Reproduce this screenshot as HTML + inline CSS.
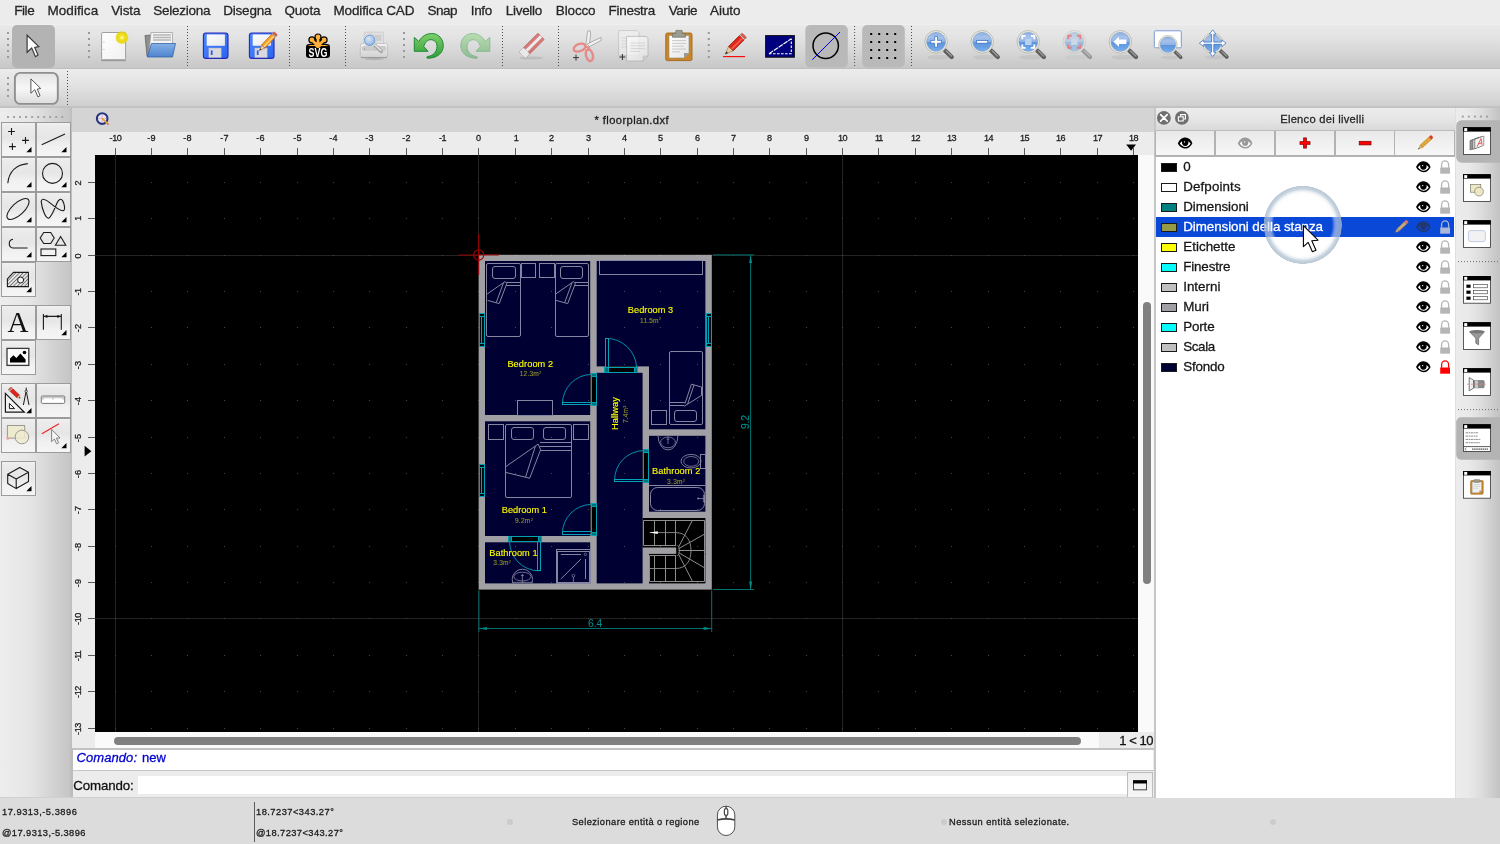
<!DOCTYPE html><html><head><meta charset="utf-8"><title>QCAD</title>
<style>html,body{margin:0;padding:0;}
body{width:1500px;height:844px;overflow:hidden;position:relative;background:#ececec;font-family:"Liberation Sans",sans-serif;}
.t{position:absolute;white-space:nowrap;line-height:1;font-family:"Liberation Sans",sans-serif;}
.a{position:absolute;}
svg{position:absolute;overflow:visible;}
#root{position:absolute;left:0;top:0;width:1500px;height:844px;overflow:hidden;will-change:transform;background:#ececec;}
.hv{-webkit-text-stroke:0.28px currentColor;}
.hv2{-webkit-text-stroke:0.12px currentColor;}
</style></head><body><div id="root">
<!-- base -->
<div class="a" style="left:0;top:0;width:1500px;height:24px;background:#ececec"></div>
<div class="a" style="left:0;top:24px;width:1500px;height:44px;background:linear-gradient(#f4f4f4 0,#e9e9e9 2.5%,#e3e3e3 30%,#d7d7d7 62%,#c7c7c7 100%)"></div>
<div class="a" style="left:0;top:68px;width:1500px;height:1px;background:#c0c0c0"></div>
<div class="a" style="left:0;top:69px;width:1500px;height:38px;background:linear-gradient(#ececec,#e4e4e4 35%,#d9d9d9 70%,#cecece)"></div>
<div class="a" style="left:0;top:106px;width:1500px;height:2px;background:#c2c2c2"></div>
<div class="a" style="left:0;top:108px;width:72px;height:689px;background:linear-gradient(90deg,#ededed,#e6e6e6 40%,#c6c6c6 96%,#bdbdbd)"></div>
<div class="a" style="left:72px;top:108px;width:1082px;height:24px;background:#d4d4d4"></div>
<div class="a" style="left:72px;top:132px;width:1082px;height:617px;background:#ececec"></div>
<div class="a" style="left:1138px;top:155px;width:16px;height:594px;background:#fafafa"></div>
<div class="a" style="left:95px;top:732px;width:1043px;height:17px;background:#fafafa"></div>
<div class="a" style="left:95px;top:155px;width:1043px;height:577px;background:#000"></div>
<div class="a" style="left:0;top:797px;width:1500px;height:47px;background:#dcdcdc"></div>
<!-- menu -->
<div class="t hv" style="left:14.25px;top:3.67px;font-size:13.5px;letter-spacing:-0.438px;color:#262626;">File</div>
<div class="t hv" style="left:47.50px;top:3.67px;font-size:13.5px;letter-spacing:0.060px;color:#262626;">Modifica</div>
<div class="t hv" style="left:111.25px;top:3.67px;font-size:13.5px;letter-spacing:-0.154px;color:#262626;">Vista</div>
<div class="t hv" style="left:153.25px;top:3.67px;font-size:13.5px;letter-spacing:-0.255px;color:#262626;">Seleziona</div>
<div class="t hv" style="left:223.25px;top:3.67px;font-size:13.5px;letter-spacing:-0.218px;color:#262626;">Disegna</div>
<div class="t hv" style="left:284.50px;top:3.67px;font-size:13.5px;letter-spacing:-0.205px;color:#262626;">Quota</div>
<div class="t hv" style="left:333.50px;top:3.67px;font-size:13.5px;letter-spacing:-0.148px;color:#262626;">Modifica CAD</div>
<div class="t hv" style="left:427.50px;top:3.67px;font-size:13.5px;letter-spacing:-0.507px;color:#262626;">Snap</div>
<div class="t hv" style="left:470.75px;top:3.67px;font-size:13.5px;letter-spacing:-0.317px;color:#262626;">Info</div>
<div class="t hv" style="left:505.75px;top:3.67px;font-size:13.5px;letter-spacing:-0.289px;color:#262626;">Livello</div>
<div class="t hv" style="left:555.75px;top:3.67px;font-size:13.5px;letter-spacing:-0.128px;color:#262626;">Blocco</div>
<div class="t hv" style="left:608.50px;top:3.67px;font-size:13.5px;letter-spacing:-0.283px;color:#262626;">Finestra</div>
<div class="t hv" style="left:668.75px;top:3.67px;font-size:13.5px;letter-spacing:-0.453px;color:#262626;">Varie</div>
<div class="t hv" style="left:710.00px;top:3.67px;font-size:13.5px;letter-spacing:-0.054px;color:#262626;">Aiuto</div>
<!-- toolbar -->
<svg width="1500" height="110" viewBox="0 0 1500 110" style="left:0;top:0">
<defs>
<radialGradient id="lens" cx="0.5" cy="0.35" r="0.7"><stop offset="0" stop-color="#a9c8ee"/><stop offset="0.6" stop-color="#5f97dc"/><stop offset="1" stop-color="#3f7ac8"/></radialGradient>
<linearGradient id="lensf" x1="0" y1="0" x2="0" y2="1"><stop offset="0" stop-color="#8eaee0"/><stop offset="0.25" stop-color="#a5c2ea"/><stop offset="0.49" stop-color="#8db3e6"/><stop offset="0.51" stop-color="#5d93da"/><stop offset="0.8" stop-color="#6aa2e6"/><stop offset="1" stop-color="#7ab4f2"/></linearGradient>
<linearGradient id="flop" x1="0" y1="0" x2="1" y2="1"><stop offset="0" stop-color="#4f86ff"/><stop offset="1" stop-color="#2a66f0"/></linearGradient>
<linearGradient id="paper" x1="0" y1="0" x2="1" y2="1"><stop offset="0" stop-color="#ffffff"/><stop offset="1" stop-color="#e4e4e4"/></linearGradient>
<linearGradient id="gr1" x1="0" y1="0" x2="0" y2="1"><stop offset="0" stop-color="#7fd06a"/><stop offset="1" stop-color="#2f9e3a"/></linearGradient>
<linearGradient id="fold" x1="0" y1="0" x2="0" y2="1"><stop offset="0" stop-color="#86b0e6"/><stop offset="1" stop-color="#4c84cf"/></linearGradient><linearGradient id="paper2" x1="0" y1="0" x2="1" y2="1"><stop offset="0" stop-color="#ffffff"/><stop offset="1" stop-color="#f0f0f0"/></linearGradient>
<radialGradient id="glow" cx="0.5" cy="0.5" r="0.5"><stop offset="0" stop-color="#fffbd0"/><stop offset="0.35" stop-color="#f2e21a"/><stop offset="0.75" stop-color="#e6d400" stop-opacity="0.9"/><stop offset="1" stop-color="#e6d400" stop-opacity="0"/></radialGradient>
<g id="mag"><ellipse cx="3" cy="15.4" rx="12" ry="2.4" fill="#000" opacity="0.055"/><line x1="9" y1="8.8" x2="15.6" y2="15.2" stroke="#5e5e5e" stroke-width="4.3" stroke-linecap="round"/><line x1="10" y1="9" x2="15.4" y2="14.2" stroke="#9a9a9a" stroke-width="1.3" stroke-linecap="round"/><circle cx="0" cy="0" r="11.3" fill="#e9e9e3" stroke="#b9b9ab" stroke-width="0.9"/><circle cx="0" cy="0" r="9.4" fill="url(#lensf)" stroke="#7f9cc8" stroke-width="0.7"/></g>
</defs>
<rect x="7" y="32" width="2" height="2" fill="#9a9a9a"/><rect x="7" y="38" width="2" height="2" fill="#9a9a9a"/><rect x="7" y="44" width="2" height="2" fill="#9a9a9a"/><rect x="7" y="50" width="2" height="2" fill="#9a9a9a"/><rect x="7" y="56" width="2" height="2" fill="#9a9a9a"/>
<rect x="12" y="25" width="43" height="43" rx="5" fill="#b3b3b3"/>
<path d="M27.10,35.20 L27.10,52.30 L31.70,48.00 L35.50,56.70 L38.00,55.10 L34.70,47.40 L38.80,46.60Z" fill="#fff" stroke="#3a3a3a" stroke-width="1.2" stroke-linejoin="miter"/>
<rect x="88" y="32" width="2" height="2" fill="#9a9a9a"/><rect x="88" y="38" width="2" height="2" fill="#9a9a9a"/><rect x="88" y="44" width="2" height="2" fill="#9a9a9a"/><rect x="88" y="50" width="2" height="2" fill="#9a9a9a"/><rect x="88" y="56" width="2" height="2" fill="#9a9a9a"/>
<g><rect x="101.6" y="32.5" width="24" height="27.2" rx="1" fill="url(#paper2)" stroke="#969696" stroke-width="0.9"/><line x1="101" y1="60.6" x2="126" y2="60.6" stroke="#9a9a9a" stroke-width="1.2"/><rect x="103.3" y="41.5" width="1.2" height="1" fill="#bbb"/><rect x="103.3" y="49" width="1.2" height="1" fill="#bbb"/><circle cx="121.9" cy="37.6" r="7" fill="url(#glow)"/></g>
<g><path d="M145,35.5 L152,35 L153,37 L170,37 L170,56 L147,56 Z" fill="#8e8e8e" stroke="#666" stroke-width="0.8"/>
<path d="M151,32.5 L172.5,32.5 L172.5,50 L149,52 Z" fill="#f4f4f4" stroke="#9a9a9a" stroke-width="0.7"/>
<path d="M153,35 L171,35 M153,37.5 L171,37.5 M153,40 L171,40" stroke="#b5b5b5" stroke-width="1.4"/>
<path d="M151.5,43.5 L175.5,43.5 L172.5,57 L147.2,57 Z" fill="url(#fold)" stroke="#3465a4" stroke-width="0.8"/></g>
<line x1="187.5" y1="26" x2="187.5" y2="66" stroke="#4d4d4d" stroke-width="1" stroke-dasharray="1 2"/>
<g><rect x="203.4" y="33" width="24.6" height="25.4" rx="2.5" fill="url(#flop)" stroke="#2727b8" stroke-width="1.1"/>
<rect x="206.8" y="34.6" width="18" height="11" fill="#f3f5fb"/><rect x="206.8" y="34.6" width="18" height="11" fill="url(#paper)" opacity="0.7"/>
<rect x="208.8" y="48" width="12.4" height="9.6" fill="#d9d9de" stroke="#9fa4c8" stroke-width="0.5"/><rect x="210.8" y="50.4" width="1.8" height="4.6" fill="#2a5fe8"/></g>
<g><rect x="249.4" y="33" width="24.6" height="25.4" rx="2.5" fill="url(#flop)" stroke="#2727b8" stroke-width="1.1"/>
<rect x="252.8" y="34.6" width="18" height="11" fill="#f3f5fb"/><rect x="252.8" y="34.6" width="18" height="11" fill="url(#paper)" opacity="0.7"/>
<rect x="254.8" y="48" width="12.4" height="9.6" fill="#d9d9de" stroke="#9fa4c8" stroke-width="0.5"/><rect x="256.8" y="50.4" width="1.8" height="4.6" fill="#2a5fe8"/></g>
<g><path d="M259.40,50.60 L265.02,47.99 L261.67,44.84Z" fill="#e9c9a0" stroke="#8a5a2b" stroke-width="0.5"/><path d="M259.40,50.60 L261.37,49.69 L260.19,48.58Z" fill="#222"/><path d="M265.02,47.99 L275.14,37.25 L271.79,34.10 L261.67,44.84Z" fill="#f5a21b" stroke="#c4610f" stroke-width="0.7"/><path d="M263.76,46.81 L273.89,36.07" stroke="#ffd98a" stroke-width="1.29"/><path d="M275.14,37.25 L275.96,36.38 L272.62,33.22 L271.79,34.10Z" fill="#d8d8d8" stroke="#999" stroke-width="0.4"/><path d="M275.96,36.38 L277.20,35.07 Q276.21,32.76 273.85,31.91 L272.62,33.22Z" fill="#e35b4c" stroke="#a8362b" stroke-width="0.5"/></g>
<line x1="289.5" y1="26" x2="289.5" y2="66" stroke="#4d4d4d" stroke-width="1" stroke-dasharray="1 2"/>
<g><line x1="318.00" y1="45.00" x2="318.00" y2="37.00" stroke="#000" stroke-width="5.2" stroke-linecap="round"/><circle cx="318.00" cy="37.00" r="3.6" fill="#000"/><line x1="318.71" y1="45.29" x2="324.08" y2="39.92" stroke="#000" stroke-width="5.2" stroke-linecap="round"/><circle cx="324.08" cy="39.92" r="3.6" fill="#000"/><line x1="317.29" y1="45.29" x2="311.92" y2="39.92" stroke="#000" stroke-width="5.2" stroke-linecap="round"/><circle cx="311.92" cy="39.92" r="3.6" fill="#000"/><rect x="306" y="44" width="24" height="14" rx="3.2" fill="#000"/><line x1="318.00" y1="46.00" x2="318.00" y2="37.00" stroke="#ffb13b" stroke-width="2.8" stroke-linecap="round"/><circle cx="318.00" cy="37.00" r="2.4" fill="#ffb13b"/><line x1="318.00" y1="46.00" x2="324.08" y2="39.92" stroke="#ffb13b" stroke-width="2.8" stroke-linecap="round"/><circle cx="324.08" cy="39.92" r="2.4" fill="#ffb13b"/><line x1="318.00" y1="46.00" x2="311.92" y2="39.92" stroke="#ffb13b" stroke-width="2.8" stroke-linecap="round"/><circle cx="311.92" cy="39.92" r="2.4" fill="#ffb13b"/><path d="M308,46 Q309,44.9 311,44.9 L325,44.9 Q327,44.9 328.3,46Z" fill="#ffb13b"/><circle cx="318" cy="45" r="3" fill="#ffb13b"/><text x="318" y="56.8" font-family="Liberation Sans" font-weight="bold" font-size="13" fill="#fff" text-anchor="middle" textLength="18.8" lengthAdjust="spacingAndGlyphs">SVG</text></g>
<line x1="345.5" y1="26" x2="345.5" y2="66" stroke="#4d4d4d" stroke-width="1" stroke-dasharray="1 2"/>
<defs><linearGradient id="prb" x1="0" y1="0" x2="0" y2="1"><stop offset="0" stop-color="#f4f4f4"/><stop offset="0.45" stop-color="#e2e2e2"/><stop offset="1" stop-color="#d2d2d2"/></linearGradient>
<radialGradient id="lens2" cx="0.4" cy="0.35" r="0.75"><stop offset="0" stop-color="#dbe6f4"/><stop offset="0.6" stop-color="#a9c4e6"/><stop offset="1" stop-color="#7fa8dc"/></radialGradient></defs>
<g><rect x="364.4" y="32.2" width="19" height="13" rx="1" fill="#e3e3e3" stroke="#c4c4c4" stroke-width="0.7"/><rect x="373" y="34.6" width="8.6" height="6.6" fill="#cfcfcf"/>
<path d="M362.6,43.4 L385.6,43.4 Q387.7,43.6 387.7,46 L387.7,55.6 Q387.7,57.4 385.6,57.4 L362.4,57.4 Q360.3,57.4 360.3,55.6 L360.3,46 Q360.3,43.6 362.6,43.4Z" fill="url(#prb)" stroke="#b4b4b4" stroke-width="0.7"/>
<rect x="362.4" y="46.6" width="23.2" height="3.6" rx="1" fill="#cdcdcd" stroke="#b2b2b2" stroke-width="0.5"/><circle cx="364.6" cy="49" r="0.6" fill="#777"/>
<path d="M361,57.6 L387,57.6" stroke="#9c9c9c" stroke-width="1.2"/><ellipse cx="374" cy="59" rx="10" ry="1.2" fill="#000" opacity="0.12"/>
<line x1="374.2" y1="44.8" x2="381.2" y2="51.4" stroke="#a8a8a8" stroke-width="3.6" stroke-linecap="round"/><line x1="375" y1="45" x2="381" y2="50.6" stroke="#e8e8e8" stroke-width="1.3" stroke-linecap="round"/>
<circle cx="369.7" cy="40.3" r="6.5" fill="#eeeeea" stroke="#c9c9c2" stroke-width="0.7"/><circle cx="369.7" cy="40.3" r="5.2" fill="url(#lens2)" stroke="#5f8fd2" stroke-width="0.9"/></g>
<rect x="403" y="32" width="2" height="2" fill="#9a9a9a"/><rect x="403" y="38" width="2" height="2" fill="#9a9a9a"/><rect x="403" y="44" width="2" height="2" fill="#9a9a9a"/><rect x="403" y="50" width="2" height="2" fill="#9a9a9a"/><rect x="403" y="56" width="2" height="2" fill="#9a9a9a"/>
<path d="M0,37.3 L4.5,41.5 C7.2,36.5 12.2,33.5 17.4,33.5 C24.2,33.5 29,39 29,45.7 C29,53 22.7,58.4 13.2,58.2 C12.2,58.2 12.2,56.6 13.3,56.5 C18.7,56 22.7,52 22.7,46.4 C22.7,42.5 20.2,39.7 16.4,39.7 C13.2,39.7 10.7,42.5 9.4,46.4 L13.7,51.3 L0,51.3 Z" transform="translate(414.3,0)" fill="url(#gr1)" stroke="#1f8a35" stroke-width="1" stroke-linejoin="round" opacity="1.0"/>
<path d="M0,37.3 L4.5,41.5 C7.2,36.5 12.2,33.5 17.4,33.5 C24.2,33.5 29,39 29,45.7 C29,53 22.7,58.4 13.2,58.2 C12.2,58.2 12.2,56.6 13.3,56.5 C18.7,56 22.7,52 22.7,46.4 C22.7,42.5 20.2,39.7 16.4,39.7 C13.2,39.7 10.7,42.5 9.4,46.4 L13.7,51.3 L0,51.3 Z" transform="translate(489.8,0) scale(-1,1)" fill="url(#gr1)" stroke="#1f8a35" stroke-width="1" stroke-linejoin="round" opacity="0.42"/>
<line x1="502.5" y1="26" x2="502.5" y2="66" stroke="#4d4d4d" stroke-width="1" stroke-dasharray="1 2"/>
<g opacity="0.62"><ellipse cx="531" cy="58" rx="12" ry="1.6" fill="#000" opacity="0.15"/>
<g transform="translate(519,52) rotate(-45)"><rect x="0" y="0" width="26.8" height="9" rx="1" fill="#d23c3c" stroke="#a62a2a" stroke-width="0.7"/><rect x="0" y="3" width="26.8" height="3" fill="#f4f4f4"/><rect x="0" y="0" width="6.2" height="9" rx="0.8" fill="#f6f6f6" stroke="#b8b8b8" stroke-width="0.6"/></g></g>
<line x1="558.5" y1="26" x2="558.5" y2="66" stroke="#4d4d4d" stroke-width="1" stroke-dasharray="1 2"/>
<g><path d="M587.6,31.2 L590.2,30.6 L590.6,34 L588.6,50.6 L585.4,49 Z" fill="#f2f2f2" stroke="#9c9c9c" stroke-width="0.8"/>
<path d="M601,37.4 L601.2,40.4 L589.6,46.6 L587.2,44 Z" fill="#f2f2f2" stroke="#9c9c9c" stroke-width="0.8"/>
<ellipse cx="579.6" cy="47.6" rx="6.2" ry="3.6" transform="rotate(-20 579.6 47.6)" fill="none" stroke="#e68a8a" stroke-width="2.4"/>
<ellipse cx="589.4" cy="55.2" rx="3.4" ry="6" transform="rotate(-14 589.4 55.2)" fill="none" stroke="#e68a8a" stroke-width="2.4"/>
<path d="M584.6,46.4 L588.4,47.6 L588.8,50" stroke="#e68a8a" stroke-width="2.4" fill="none"/>
<path d="M573,57.6 L579,57.6 M576,54.6 L576,60.6" stroke="#333" stroke-width="1"/></g>
<g opacity="0.55"><path d="M618.6,30.6 L637,30.6 L639,32.6 L639,55.4 L618.6,55.4 Z" fill="#f4f4f4" stroke="#a9a9a9" stroke-width="0.8"/><path d="M621.6,38 L634,38 M621.6,41 L634,41 M621.6,44 L634,44 M621.6,47 L634,47" stroke="#c9c9c9" stroke-width="0.9"/></g>
<g opacity="0.78"><path d="M626.6,36.4 L646.4,36.4 L648,38 L648,56 L643,61 L626.6,61 Z" fill="url(#paper)" stroke="#a9a9a9" stroke-width="0.8"/><path d="M648,56 L643,56 L643,61Z" fill="#cfcfcf" stroke="#a9a9a9" stroke-width="0.5"/>
<path d="M630.4,43 L645,43 M630.4,45.8 L645,45.8 M630.4,48.6 L645,48.6 M630.4,51.4 L640,51.4" stroke="#cdcdcd" stroke-width="0.9"/></g>
<path d="M619.4,57 L625.4,57 M622.4,54 L622.4,60" stroke="#333" stroke-width="1"/>
<g><rect x="665.8" y="33" width="26.2" height="27.6" rx="1.6" fill="#c9872a" stroke="#a2661a" stroke-width="0.9"/>
<path d="M669,35.4 L689,35.4 L689,53 L684,58 L669,58 Z" fill="url(#paper)" stroke="#8b8b80" stroke-width="0.6"/><path d="M689,53 L684,53 L684,58Z" fill="#9a9a9a"/>
<path d="M672,40.6 L686,40.6 M672,43.4 L686,43.4 M672,46.2 L684,46.2 M672,49 L686,49 M672,51.8 L680,51.8" stroke="#c4c4c4" stroke-width="0.9"/>
<path d="M672.4,33.4 L675.4,33.4 L676,30.4 L682,30.4 L682.6,33.4 L685.4,33.4 L685.4,37.2 L672.4,37.2 Z" fill="#9b9b8f" stroke="#6e6e64" stroke-width="0.7"/></g>
<rect x="707.8" y="32" width="2" height="2" fill="#9a9a9a"/><rect x="707.8" y="38" width="2" height="2" fill="#9a9a9a"/><rect x="707.8" y="44" width="2" height="2" fill="#9a9a9a"/><rect x="707.8" y="50" width="2" height="2" fill="#9a9a9a"/><rect x="707.8" y="56" width="2" height="2" fill="#9a9a9a"/>
<g><path d="M725.20,54.20 L733.14,50.85 L728.64,46.30Z" fill="#e8c9a0" stroke="#8a5a2b" stroke-width="0.5"/><path d="M725.20,54.20 L727.98,53.03 L726.40,51.43Z" fill="#222"/><path d="M733.14,50.85 L744.23,39.87 L739.73,35.32 L728.64,46.30Z" fill="#e3261a" stroke="#7c170e" stroke-width="0.7"/><path d="M731.45,49.14 L742.55,38.16" stroke="#f4574a" stroke-width="1.79"/><path d="M744.23,39.87 L745.09,39.02 L740.59,34.47 L739.73,35.32Z" fill="#d8d8d8" stroke="#999" stroke-width="0.4"/><path d="M745.09,39.02 L746.37,37.76 Q744.83,34.78 741.86,33.21 L740.59,34.47Z" fill="#e35b4c" stroke="#a8362b" stroke-width="0.5"/></g>
<line x1="723" y1="56.6" x2="745" y2="56.6" stroke="#f00" stroke-width="1.1"/>
<g><rect x="765.6" y="35.6" width="28.8" height="21.6" fill="#00007f" stroke="#111" stroke-width="1"/><path d="M769,53.7 L791.3,53.7 L791.3,38.7" stroke="#fff" stroke-width="1.1" fill="none" stroke-dasharray="2.6 1.4"/><path d="M769,53.7 L791.3,38.7" stroke="#fff" stroke-width="1.1" fill="none" stroke-dasharray="5 0.8"/></g>
<rect x="805.3" y="25" width="42.5" height="42.5" rx="5" fill="#b9b9b9"/>
<circle cx="825.7" cy="45.7" r="12.7" fill="none" stroke="#000" stroke-width="1.5"/>
<line x1="812.3" y1="59.7" x2="840" y2="32" stroke="#0000ff" stroke-width="1"/>
<line x1="854.6" y1="26" x2="854.6" y2="66" stroke="#4d4d4d" stroke-width="1" stroke-dasharray="1 2"/>
<rect x="862.2" y="25" width="42.6" height="42.5" rx="5" fill="#b9b9b9"/>
<rect x="870.2" y="33.0" width="2" height="2" fill="#000"/>
<rect x="870.2" y="41.0" width="2" height="2" fill="#000"/>
<rect x="870.2" y="49.0" width="2" height="2" fill="#000"/>
<rect x="870.2" y="57.0" width="2" height="2" fill="#000"/>
<rect x="878.2" y="33.0" width="2" height="2" fill="#000"/>
<rect x="878.2" y="41.0" width="2" height="2" fill="#000"/>
<rect x="878.2" y="49.0" width="2" height="2" fill="#000"/>
<rect x="878.2" y="57.0" width="2" height="2" fill="#000"/>
<rect x="886.2" y="33.0" width="2" height="2" fill="#000"/>
<rect x="886.2" y="41.0" width="2" height="2" fill="#000"/>
<rect x="886.2" y="49.0" width="2" height="2" fill="#000"/>
<rect x="886.2" y="57.0" width="2" height="2" fill="#000"/>
<rect x="894.2" y="33.0" width="2" height="2" fill="#000"/>
<rect x="894.2" y="41.0" width="2" height="2" fill="#000"/>
<rect x="894.2" y="49.0" width="2" height="2" fill="#000"/>
<rect x="894.2" y="57.0" width="2" height="2" fill="#000"/>
<line x1="911.5" y1="26" x2="911.5" y2="66" stroke="#4d4d4d" stroke-width="1" stroke-dasharray="1 2"/>
<g transform="translate(936.1,41.8)"><use href="#mag"/><path d="M-5.4,-1.4 H-1.4 V-5.4 H1.4 V-1.4 H5.4 V1.4 H1.4 V5.4 H-1.4 V1.4 H-5.4Z" fill="#fff" stroke="#3f74c4" stroke-width="0.8"/></g>
<g transform="translate(982.2,41.8)"><use href="#mag"/><rect x="-5.6" y="-1.4" width="11.2" height="2.8" fill="#fff" stroke="#3f74c4" stroke-width="0.8"/></g>
<g transform="translate(1028.3,41.8)"><use href="#mag"/><rect x="-3.2" y="-3.2" width="6.4" height="6.4" fill="#b9d0ee"/><path d="M-6,-2.6 L-6,-6 L-2.6,-6 M2.6,-6 L6,-6 L6,-2.6 M6,2.6 L6,6 L2.6,6 M-2.6,6 L-6,6 L-6,2.6" stroke="#fff" stroke-width="1.8" fill="none"/></g>
<g transform="translate(1074.3,41.8)" opacity="0.5"><use href="#mag"/><rect x="-3.2" y="-3.2" width="6.4" height="6.4" fill="#b9d0ee"/><path d="M-6,-2.6 L-6,-6 L-2.6,-6 M2.6,-6 L6,-6 L6,-2.6 M6,2.6 L6,6 L2.6,6 M-2.6,6 L-6,6 L-6,2.6" stroke="#ee2222" stroke-width="1.9" fill="none"/></g>
<g transform="translate(1120.4,41.8)"><use href="#mag"/><path d="M-7,0 L-1.4,-5 L-1.4,-2.2 L6,-2.2 L6,2.2 L-1.4,2.2 L-1.4,5Z" fill="#fff"/></g>
<g><rect x="1154.3" y="30.8" width="27" height="17" rx="1" fill="#fff" stroke="#6f93cf" stroke-width="0.9"/><g transform="translate(1167.9,44.8) scale(0.82)"><use href="#mag"/></g></g>
<g transform="translate(1212.7,43.2)"><g transform="scale(0.9)"><use href="#mag"/></g><path d="M0,-13.4 L3.3,-9 L1.1,-9 L1.1,-1.1 L9,-1.1 L9,-3.3 L13.4,0 L9,3.3 L9,1.1 L1.1,1.1 L1.1,9 L3.3,9 L0,13.4 L-3.3,9 L-1.1,9 L-1.1,1.1 L-9,1.1 L-9,3.3 L-13.4,0 L-9,-3.3 L-9,-1.1 L-1.1,-1.1 L-1.1,-9 L-3.3,-9Z" fill="#fff" stroke="#3f76c8" stroke-width="0.8" stroke-linejoin="miter"/></g>
<rect x="7" y="77" width="2" height="2" fill="#9a9a9a"/><rect x="7" y="83" width="2" height="2" fill="#9a9a9a"/><rect x="7" y="89" width="2" height="2" fill="#9a9a9a"/><rect x="7" y="95" width="2" height="2" fill="#9a9a9a"/>
<defs><linearGradient id="btn2" x1="0" y1="0" x2="0" y2="1"><stop offset="0" stop-color="#e4e4e4"/><stop offset="0.5" stop-color="#f7f7f7"/><stop offset="1" stop-color="#dcdcdc"/></linearGradient></defs>
<rect x="14.9" y="72.9" width="42.9" height="31" rx="5.4" fill="url(#btn2)" stroke="#8f8f8f" stroke-width="1.9"/>
<path d="M30.90,78.90 L30.90,93.26 L34.76,89.65 L37.96,96.96 L40.06,95.62 L37.28,89.15 L40.73,88.48Z" fill="#fff" stroke="#555" stroke-width="1.0" stroke-linejoin="miter"/>
<line x1="67.5" y1="71" x2="67.5" y2="105" stroke="#4d4d4d" stroke-width="1" stroke-dasharray="1 2"/>
</svg>
<!-- lefttools -->
<svg width="100" height="844" viewBox="0 0 100 844" style="left:0;top:0">
<defs><linearGradient id="lb" x1="0" y1="0" x2="0" y2="1"><stop offset="0" stop-color="#f1f1f1"/><stop offset="0.12" stop-color="#ebebeb"/><stop offset="0.45" stop-color="#e6e6e6"/><stop offset="0.7" stop-color="#f1f1f1"/><stop offset="1" stop-color="#f5f5f5"/></linearGradient><pattern id="hat" width="2.6" height="2.6" patternUnits="userSpaceOnUse" patternTransform="rotate(-45)"><rect width="2.6" height="2.6" fill="#e8e8e8"/><line x1="0" y1="1.3" x2="2.6" y2="1.3" stroke="#555" stroke-width="0.7"/></pattern></defs>
<rect x="7.00" y="116" width="2" height="2" fill="#a2a2a2"/>
<rect x="13.03" y="116" width="2" height="2" fill="#a2a2a2"/>
<rect x="19.06" y="116" width="2" height="2" fill="#a2a2a2"/>
<rect x="25.09" y="116" width="2" height="2" fill="#a2a2a2"/>
<rect x="31.12" y="116" width="2" height="2" fill="#a2a2a2"/>
<rect x="37.15" y="116" width="2" height="2" fill="#a2a2a2"/>
<rect x="43.18" y="116" width="2" height="2" fill="#a2a2a2"/>
<rect x="49.21" y="116" width="2" height="2" fill="#a2a2a2"/>
<rect x="55.24" y="116" width="2" height="2" fill="#a2a2a2"/>
<rect x="61.27" y="116" width="2" height="2" fill="#a2a2a2"/>
<rect x="1.5" y="122.5" width="34" height="34" fill="url(#lb)" stroke="#9c9c9c" stroke-width="1"/>
<rect x="36.5" y="122.5" width="34" height="34" fill="url(#lb)" stroke="#9c9c9c" stroke-width="1"/>
<rect x="1.5" y="157.5" width="34" height="34" fill="url(#lb)" stroke="#9c9c9c" stroke-width="1"/>
<rect x="36.5" y="157.5" width="34" height="34" fill="url(#lb)" stroke="#9c9c9c" stroke-width="1"/>
<rect x="1.5" y="192.5" width="34" height="34" fill="url(#lb)" stroke="#9c9c9c" stroke-width="1"/>
<rect x="36.5" y="192.5" width="34" height="34" fill="url(#lb)" stroke="#9c9c9c" stroke-width="1"/>
<rect x="1.5" y="227.5" width="34" height="34" fill="url(#lb)" stroke="#9c9c9c" stroke-width="1"/>
<rect x="36.5" y="227.5" width="34" height="34" fill="url(#lb)" stroke="#9c9c9c" stroke-width="1"/>
<rect x="1.5" y="262.5" width="34" height="34" fill="url(#lb)" stroke="#9c9c9c" stroke-width="1"/>
<rect x="1.5" y="305.5" width="34" height="34" fill="url(#lb)" stroke="#9c9c9c" stroke-width="1"/>
<rect x="36.5" y="305.5" width="34" height="34" fill="url(#lb)" stroke="#9c9c9c" stroke-width="1"/>
<rect x="1.5" y="340.5" width="34" height="34" fill="url(#lb)" stroke="#9c9c9c" stroke-width="1"/>
<rect x="1.5" y="383.5" width="34" height="34" fill="url(#lb)" stroke="#9c9c9c" stroke-width="1"/>
<rect x="36.5" y="383.5" width="34" height="34" fill="url(#lb)" stroke="#9c9c9c" stroke-width="1"/>
<rect x="1.5" y="418.5" width="34" height="34" fill="url(#lb)" stroke="#9c9c9c" stroke-width="1"/>
<rect x="36.5" y="418.5" width="34" height="34" fill="url(#lb)" stroke="#9c9c9c" stroke-width="1"/>
<rect x="1.5" y="461.5" width="34" height="34" fill="url(#lb)" stroke="#9c9c9c" stroke-width="1"/>
<path d="M31.5,147.10000000000002 L31.5,152.3 L26.3,152.3Z" fill="#000"/>
<path d="M66.5,147.10000000000002 L66.5,152.3 L61.3,152.3Z" fill="#000"/>
<path d="M31.5,182.10000000000002 L31.5,187.3 L26.3,187.3Z" fill="#000"/>
<path d="M66.5,182.10000000000002 L66.5,187.3 L61.3,187.3Z" fill="#000"/>
<path d="M31.5,217.10000000000002 L31.5,222.3 L26.3,222.3Z" fill="#000"/>
<path d="M66.5,217.10000000000002 L66.5,222.3 L61.3,222.3Z" fill="#000"/>
<path d="M31.5,252.10000000000002 L31.5,257.3 L26.3,257.3Z" fill="#000"/>
<path d="M66.5,252.10000000000002 L66.5,257.3 L61.3,257.3Z" fill="#000"/>
<path d="M31.5,287.1 L31.5,292.3 L26.3,292.3Z" fill="#000"/>
<path d="M66.5,330.1 L66.5,335.3 L61.3,335.3Z" fill="#000"/>
<path d="M31.5,408.1 L31.5,413.3 L26.3,413.3Z" fill="#000"/>
<path d="M66.5,443.1 L66.5,448.3 L61.3,448.3Z" fill="#000"/>
<path d="M31.5,486.1 L31.5,491.3 L26.3,491.3Z" fill="#000"/>
<path d="M8.1,131.5 L14.9,131.5 M11.5,128.1 L11.5,134.9" stroke="#1a1a1a" stroke-width="1.1"/><path d="M22.1,140.4 L28.9,140.4 M25.5,137.0 L25.5,143.8" stroke="#1a1a1a" stroke-width="1.1"/><path d="M9.0,146.6 L15.8,146.6 M12.4,143.2 L12.4,150.0" stroke="#1a1a1a" stroke-width="1.1"/>
<line x1="41.7" y1="144.7" x2="65" y2="134" stroke="#1a1a1a" stroke-width="1.1"/>
<path d="M7.8,183.2 C9,171 17,164.6 27.8,163.6" fill="none" stroke="#1a1a1a" stroke-width="1.1"/>
<circle cx="52.5" cy="173.4" r="10" fill="none" stroke="#1a1a1a" stroke-width="1.1"/>
<ellipse cx="18" cy="209" rx="14" ry="6" transform="rotate(-43 18 209)" fill="none" stroke="#1a1a1a" stroke-width="1.1"/>
<path d="M41.2,201.6 C41.6,197.6 46,199.4 50,202.8 C55,207 60,210.6 63,210.8 C65.6,210.6 64.6,204 62.6,200.6 C61,198 58.6,199.4 57,203 C54,210 51.6,217 48.6,218.2 C45.6,218.6 42,209 41.2,201.6Z" fill="none" stroke="#1a1a1a" stroke-width="1.1"/>
<path d="M13,239.3 A4.4,4.4 0 0 0 13,248 L27.6,248" fill="none" stroke="#1a1a1a" stroke-width="1.1"/>
<polygon points="54.20,238.00 50.70,243.54 43.70,243.54 40.20,238.00 43.70,232.46 50.70,232.46" fill="none" stroke="#1a1a1a" stroke-width="1.1"/>
<polygon points="55.4,245.2 65.8,245.2 60.6,236.5" fill="none" stroke="#1a1a1a" stroke-width="1.1"/>
<rect x="41" y="249" width="14.8" height="6.6" fill="none" stroke="#1a1a1a" stroke-width="1.1"/>
<path d="M7.4,286.6 L7.4,279 L13.4,272.4 L28.4,272.4 L28.4,286.6Z" fill="url(#hat)" stroke="#1a1a1a" stroke-width="1.1"/><circle cx="20.6" cy="280" r="3" fill="#f4f4f4" stroke="#1a1a1a" stroke-width="1"/>
<text x="18" y="331.6" font-family="Liberation Serif" font-size="29" text-anchor="middle" fill="#111">A</text>
<path d="M43.4,313.9 L43.4,329.7 M61.3,313.9 L61.3,329.7 M43.4,316.4 L61.3,316.4" stroke="#1a1a1a" stroke-width="1.1" fill="none"/><path d="M43.8,316.4 L47.4,314.8 L47.4,318Z M60.9,316.4 L57.3,314.8 L57.3,318Z" fill="#1a1a1a"/>
<rect x="7" y="348.4" width="21.8" height="17" fill="#fff" stroke="#3a3a3a" stroke-width="1.3"/><path d="M10,362.6 L10,358.6 L13.4,355.2 L16.4,358 L20.4,353.6 L25.6,359.4 L25.6,362.6Z" fill="#000"/><circle cx="24.5" cy="352.5" r="1.8" fill="#000"/>
<path d="M5.4,393.4 L5.4,412.2 L24.3,412.2Z" fill="#f2f2f2" stroke="#1a1a1a" stroke-width="1.2" stroke-linejoin="miter"/><path d="M9.4,403.4 L9.4,408.6 L14.6,408.6Z" fill="none" stroke="#1a1a1a" stroke-width="1"/>
<g transform="translate(20.2,398.2) rotate(-137)"><path d="M0,0 L3.2,-1.9 L3.2,1.9Z" fill="#e8c9a0" stroke="#7a4a1a" stroke-width="0.4"/><path d="M0,0 L1.2,-0.7 L1.2,0.7Z" fill="#222"/><rect x="3.2" y="-1.9" width="9" height="3.8" fill="#e0241b" stroke="#8c1d12" stroke-width="0.5"/><rect x="12.2" y="-1.9" width="1" height="3.8" fill="#ccc"/><path d="M13.2,-1.9 L14.2,-1.9 Q15.2,0 14.2,1.9 L13.2,1.9Z" fill="#e35b4c" stroke="#8c1d12" stroke-width="0.4"/></g>
<path d="M26.2,387.6 L26.2,391 M26.2,391 L23.4,405 M26.2,391 L29,405" stroke="#1a1a1a" stroke-width="1" fill="none"/><circle cx="26.2" cy="391.4" r="1.2" fill="#ddd" stroke="#1a1a1a" stroke-width="0.7"/>
<rect x="41.3" y="396" width="23.4" height="7.4" rx="1" fill="#fff" stroke="#777" stroke-width="1"/>
<line x1="43" y1="396.5" x2="43" y2="399.5" stroke="#555" stroke-width="0.6"/>
<line x1="45" y1="396.5" x2="45" y2="398.3" stroke="#555" stroke-width="0.6"/>
<line x1="47" y1="396.5" x2="47" y2="398.3" stroke="#555" stroke-width="0.6"/>
<line x1="49" y1="396.5" x2="49" y2="398.3" stroke="#555" stroke-width="0.6"/>
<line x1="51" y1="396.5" x2="51" y2="398.3" stroke="#555" stroke-width="0.6"/>
<line x1="53" y1="396.5" x2="53" y2="399.5" stroke="#555" stroke-width="0.6"/>
<line x1="55" y1="396.5" x2="55" y2="398.3" stroke="#555" stroke-width="0.6"/>
<line x1="57" y1="396.5" x2="57" y2="398.3" stroke="#555" stroke-width="0.6"/>
<line x1="59" y1="396.5" x2="59" y2="398.3" stroke="#555" stroke-width="0.6"/>
<line x1="61" y1="396.5" x2="61" y2="398.3" stroke="#555" stroke-width="0.6"/>
<line x1="63" y1="396.5" x2="63" y2="399.5" stroke="#555" stroke-width="0.6"/>
<rect x="7.4" y="425.5" width="17.3" height="12.6" fill="#eeead0" stroke="#9a9a90" stroke-width="1"/><circle cx="21.9" cy="437" r="6.8" fill="#eeead0" fill-opacity="0.85" stroke="#9a9a90" stroke-width="1"/><circle cx="7.7" cy="438.4" r="1.3" fill="#f29b9b"/>
<line x1="41.9" y1="433.8" x2="59" y2="423.8" stroke="#ee2222" stroke-width="1.1"/>
<path d="M51.6,429.4 L51.6,441.6 L54.4,439 L56.6,443.8 L58.6,442.8 L56.4,438.2 L60,438Z" fill="#f4f4f4" stroke="#777" stroke-width="0.9" stroke-linejoin="round"/>
<path d="M19.7,467.4 L7.7,474.3 L16.2,479 L28.5,472.3Z M7.7,474.3 L7.7,483.5 L16.2,488.6 L16.2,479 M16.2,488.6 L28.5,481.5 L28.5,472.3" fill="none" stroke="#1a1a1a" stroke-width="1.1" stroke-linejoin="round"/>
</svg>
<!-- canvas -->
<div class="t hv" style="left:594.50px;top:114.52px;font-size:11.2px;letter-spacing:0.406px;color:#1a1a1a;">* floorplan.dxf</div>
<svg width="1500" height="844" viewBox="0 0 1500 844" style="left:0;top:0">
<g><circle cx="102.2" cy="118.6" r="5.3" fill="#e6e9f2" stroke="#26367f" stroke-width="2.1"/><path d="M98.5,118.6 L106,118.6 M102.2,115 L102.2,122" stroke="#d88" stroke-width="0.6"/><line x1="102.6" y1="118.8" x2="107.6" y2="123.6" stroke="#e7a33b" stroke-width="1.7" stroke-linecap="round"/><circle cx="107.9" cy="124" r="0.9" fill="#d66"/></g>
<line x1="115.5" y1="148" x2="115.5" y2="155" stroke="#5a5a5a" stroke-width="1"/>
<line x1="151.5" y1="148" x2="151.5" y2="155" stroke="#5a5a5a" stroke-width="1"/>
<line x1="187.5" y1="148" x2="187.5" y2="155" stroke="#5a5a5a" stroke-width="1"/>
<line x1="224.5" y1="148" x2="224.5" y2="155" stroke="#5a5a5a" stroke-width="1"/>
<line x1="260.5" y1="148" x2="260.5" y2="155" stroke="#5a5a5a" stroke-width="1"/>
<line x1="297.5" y1="148" x2="297.5" y2="155" stroke="#5a5a5a" stroke-width="1"/>
<line x1="333.5" y1="148" x2="333.5" y2="155" stroke="#5a5a5a" stroke-width="1"/>
<line x1="369.5" y1="148" x2="369.5" y2="155" stroke="#5a5a5a" stroke-width="1"/>
<line x1="406.5" y1="148" x2="406.5" y2="155" stroke="#5a5a5a" stroke-width="1"/>
<line x1="442.5" y1="148" x2="442.5" y2="155" stroke="#5a5a5a" stroke-width="1"/>
<line x1="478.5" y1="148" x2="478.5" y2="155" stroke="#5a5a5a" stroke-width="1"/>
<line x1="515.5" y1="148" x2="515.5" y2="155" stroke="#5a5a5a" stroke-width="1"/>
<line x1="551.5" y1="148" x2="551.5" y2="155" stroke="#5a5a5a" stroke-width="1"/>
<line x1="588.5" y1="148" x2="588.5" y2="155" stroke="#5a5a5a" stroke-width="1"/>
<line x1="624.5" y1="148" x2="624.5" y2="155" stroke="#5a5a5a" stroke-width="1"/>
<line x1="660.5" y1="148" x2="660.5" y2="155" stroke="#5a5a5a" stroke-width="1"/>
<line x1="697.5" y1="148" x2="697.5" y2="155" stroke="#5a5a5a" stroke-width="1"/>
<line x1="733.5" y1="148" x2="733.5" y2="155" stroke="#5a5a5a" stroke-width="1"/>
<line x1="769.5" y1="148" x2="769.5" y2="155" stroke="#5a5a5a" stroke-width="1"/>
<line x1="806.5" y1="148" x2="806.5" y2="155" stroke="#5a5a5a" stroke-width="1"/>
<line x1="842.5" y1="148" x2="842.5" y2="155" stroke="#5a5a5a" stroke-width="1"/>
<line x1="878.5" y1="148" x2="878.5" y2="155" stroke="#5a5a5a" stroke-width="1"/>
<line x1="915.5" y1="148" x2="915.5" y2="155" stroke="#5a5a5a" stroke-width="1"/>
<line x1="951.5" y1="148" x2="951.5" y2="155" stroke="#5a5a5a" stroke-width="1"/>
<line x1="988.5" y1="148" x2="988.5" y2="155" stroke="#5a5a5a" stroke-width="1"/>
<line x1="1024.5" y1="148" x2="1024.5" y2="155" stroke="#5a5a5a" stroke-width="1"/>
<line x1="1060.5" y1="148" x2="1060.5" y2="155" stroke="#5a5a5a" stroke-width="1"/>
<line x1="1097.5" y1="148" x2="1097.5" y2="155" stroke="#5a5a5a" stroke-width="1"/>
<line x1="1133.5" y1="148" x2="1133.5" y2="155" stroke="#5a5a5a" stroke-width="1"/>
<line x1="88" y1="182.5" x2="95" y2="182.5" stroke="#5a5a5a" stroke-width="1"/>
<line x1="88" y1="218.5" x2="95" y2="218.5" stroke="#5a5a5a" stroke-width="1"/>
<line x1="88" y1="255.5" x2="95" y2="255.5" stroke="#5a5a5a" stroke-width="1"/>
<line x1="88" y1="291.5" x2="95" y2="291.5" stroke="#5a5a5a" stroke-width="1"/>
<line x1="88" y1="327.5" x2="95" y2="327.5" stroke="#5a5a5a" stroke-width="1"/>
<line x1="88" y1="364.5" x2="95" y2="364.5" stroke="#5a5a5a" stroke-width="1"/>
<line x1="88" y1="400.5" x2="95" y2="400.5" stroke="#5a5a5a" stroke-width="1"/>
<line x1="88" y1="437.5" x2="95" y2="437.5" stroke="#5a5a5a" stroke-width="1"/>
<line x1="88" y1="473.5" x2="95" y2="473.5" stroke="#5a5a5a" stroke-width="1"/>
<line x1="88" y1="509.5" x2="95" y2="509.5" stroke="#5a5a5a" stroke-width="1"/>
<line x1="88" y1="546.5" x2="95" y2="546.5" stroke="#5a5a5a" stroke-width="1"/>
<line x1="88" y1="582.5" x2="95" y2="582.5" stroke="#5a5a5a" stroke-width="1"/>
<line x1="88" y1="618.5" x2="95" y2="618.5" stroke="#5a5a5a" stroke-width="1"/>
<line x1="88" y1="655.5" x2="95" y2="655.5" stroke="#5a5a5a" stroke-width="1"/>
<line x1="88" y1="691.5" x2="95" y2="691.5" stroke="#5a5a5a" stroke-width="1"/>
<line x1="88" y1="728.5" x2="95" y2="728.5" stroke="#5a5a5a" stroke-width="1"/>
<path d="M1126.2,144.6 L1136,144.6 L1131.1,150.8Z" fill="#000"/>
<path d="M84.6,445.8 L84.6,456.6 L91.4,451.2Z" fill="#000"/>
</svg>
<div class="t hv" style="left:109.47px;top:134.10px;font-size:9.1px;letter-spacing:-0.349px;color:#1c1c1c;">-10</div>
<div class="t hv" style="left:147.22px;top:134.10px;font-size:9.1px;letter-spacing:0.246px;color:#1c1c1c;">-9</div>
<div class="t hv" style="left:183.22px;top:134.10px;font-size:9.1px;letter-spacing:0.246px;color:#1c1c1c;">-8</div>
<div class="t hv" style="left:220.22px;top:134.10px;font-size:9.1px;letter-spacing:0.246px;color:#1c1c1c;">-7</div>
<div class="t hv" style="left:256.23px;top:134.10px;font-size:9.1px;letter-spacing:0.246px;color:#1c1c1c;">-6</div>
<div class="t hv" style="left:293.23px;top:134.10px;font-size:9.1px;letter-spacing:0.246px;color:#1c1c1c;">-5</div>
<div class="t hv" style="left:329.23px;top:134.10px;font-size:9.1px;letter-spacing:0.246px;color:#1c1c1c;">-4</div>
<div class="t hv" style="left:365.23px;top:134.10px;font-size:9.1px;letter-spacing:0.246px;color:#1c1c1c;">-3</div>
<div class="t hv" style="left:402.23px;top:134.10px;font-size:9.1px;letter-spacing:0.246px;color:#1c1c1c;">-2</div>
<div class="t hv" style="left:439.10px;top:134.10px;font-size:9.1px;letter-spacing:-0.629px;color:#1c1c1c;">-1</div>
<div class="t hv" style="left:475.88px;top:134.10px;font-size:9.1px;letter-spacing:0.210px;color:#1c1c1c;">0</div>
<div class="t hv" style="left:513.75px;top:134.10px;font-size:9.1px;letter-spacing:-1.540px;color:#1c1c1c;">1</div>
<div class="t hv" style="left:548.88px;top:134.10px;font-size:9.1px;letter-spacing:0.210px;color:#1c1c1c;">2</div>
<div class="t hv" style="left:585.88px;top:134.10px;font-size:9.1px;letter-spacing:0.210px;color:#1c1c1c;">3</div>
<div class="t hv" style="left:621.88px;top:134.10px;font-size:9.1px;letter-spacing:0.210px;color:#1c1c1c;">4</div>
<div class="t hv" style="left:657.88px;top:134.10px;font-size:9.1px;letter-spacing:0.210px;color:#1c1c1c;">5</div>
<div class="t hv" style="left:694.88px;top:134.10px;font-size:9.1px;letter-spacing:0.210px;color:#1c1c1c;">6</div>
<div class="t hv" style="left:730.88px;top:134.10px;font-size:9.1px;letter-spacing:0.210px;color:#1c1c1c;">7</div>
<div class="t hv" style="left:766.88px;top:134.10px;font-size:9.1px;letter-spacing:0.210px;color:#1c1c1c;">8</div>
<div class="t hv" style="left:803.88px;top:134.10px;font-size:9.1px;letter-spacing:0.210px;color:#1c1c1c;">9</div>
<div class="t hv" style="left:838.12px;top:134.10px;font-size:9.1px;letter-spacing:-0.665px;color:#1c1c1c;">10</div>
<div class="t hv" style="left:875.00px;top:134.10px;font-size:9.1px;letter-spacing:-1.204px;color:#1c1c1c;">11</div>
<div class="t hv" style="left:911.12px;top:134.10px;font-size:9.1px;letter-spacing:-0.665px;color:#1c1c1c;">12</div>
<div class="t hv" style="left:947.12px;top:134.10px;font-size:9.1px;letter-spacing:-0.665px;color:#1c1c1c;">13</div>
<div class="t hv" style="left:984.12px;top:134.10px;font-size:9.1px;letter-spacing:-0.665px;color:#1c1c1c;">14</div>
<div class="t hv" style="left:1020.12px;top:134.10px;font-size:9.1px;letter-spacing:-0.665px;color:#1c1c1c;">15</div>
<div class="t hv" style="left:1056.12px;top:134.10px;font-size:9.1px;letter-spacing:-0.665px;color:#1c1c1c;">16</div>
<div class="t hv" style="left:1093.12px;top:134.10px;font-size:9.1px;letter-spacing:-0.665px;color:#1c1c1c;">17</div>
<div class="t hv" style="left:1129.12px;top:134.10px;font-size:9.1px;letter-spacing:-0.665px;color:#1c1c1c;">18</div>
<div class="t hv" style="left:81.7px;top:182.50px;font-size:9.1px;letter-spacing:0.210px;color:#1c1c1c;transform-origin:0 0;transform:rotate(-90deg) translate(-2.62px,-7.70px)">2</div>
<div class="t hv" style="left:81.7px;top:218.50px;font-size:9.1px;letter-spacing:-1.540px;color:#1c1c1c;transform-origin:0 0;transform:rotate(-90deg) translate(-1.75px,-7.70px)">1</div>
<div class="t hv" style="left:81.7px;top:255.50px;font-size:9.1px;letter-spacing:0.210px;color:#1c1c1c;transform-origin:0 0;transform:rotate(-90deg) translate(-2.62px,-7.70px)">0</div>
<div class="t hv" style="left:81.7px;top:291.50px;font-size:9.1px;letter-spacing:-0.629px;color:#1c1c1c;transform-origin:0 0;transform:rotate(-90deg) translate(-3.40px,-7.70px)">-1</div>
<div class="t hv" style="left:81.7px;top:327.50px;font-size:9.1px;letter-spacing:0.246px;color:#1c1c1c;transform-origin:0 0;transform:rotate(-90deg) translate(-4.28px,-7.70px)">-2</div>
<div class="t hv" style="left:81.7px;top:364.50px;font-size:9.1px;letter-spacing:0.246px;color:#1c1c1c;transform-origin:0 0;transform:rotate(-90deg) translate(-4.28px,-7.70px)">-3</div>
<div class="t hv" style="left:81.7px;top:400.50px;font-size:9.1px;letter-spacing:0.246px;color:#1c1c1c;transform-origin:0 0;transform:rotate(-90deg) translate(-4.28px,-7.70px)">-4</div>
<div class="t hv" style="left:81.7px;top:437.50px;font-size:9.1px;letter-spacing:0.246px;color:#1c1c1c;transform-origin:0 0;transform:rotate(-90deg) translate(-4.28px,-7.70px)">-5</div>
<div class="t hv" style="left:81.7px;top:473.50px;font-size:9.1px;letter-spacing:0.246px;color:#1c1c1c;transform-origin:0 0;transform:rotate(-90deg) translate(-4.28px,-7.70px)">-6</div>
<div class="t hv" style="left:81.7px;top:509.50px;font-size:9.1px;letter-spacing:0.246px;color:#1c1c1c;transform-origin:0 0;transform:rotate(-90deg) translate(-4.28px,-7.70px)">-7</div>
<div class="t hv" style="left:81.7px;top:546.50px;font-size:9.1px;letter-spacing:0.246px;color:#1c1c1c;transform-origin:0 0;transform:rotate(-90deg) translate(-4.28px,-7.70px)">-8</div>
<div class="t hv" style="left:81.7px;top:582.50px;font-size:9.1px;letter-spacing:0.246px;color:#1c1c1c;transform-origin:0 0;transform:rotate(-90deg) translate(-4.28px,-7.70px)">-9</div>
<div class="t hv" style="left:81.7px;top:618.50px;font-size:9.1px;letter-spacing:-0.349px;color:#1c1c1c;transform-origin:0 0;transform:rotate(-90deg) translate(-6.03px,-7.70px)">-10</div>
<div class="t hv" style="left:81.7px;top:655.50px;font-size:9.1px;letter-spacing:-0.708px;color:#1c1c1c;transform-origin:0 0;transform:rotate(-90deg) translate(-5.15px,-7.70px)">-11</div>
<div class="t hv" style="left:81.7px;top:691.50px;font-size:9.1px;letter-spacing:-0.349px;color:#1c1c1c;transform-origin:0 0;transform:rotate(-90deg) translate(-6.03px,-7.70px)">-12</div>
<div class="t hv" style="left:81.7px;top:728.50px;font-size:9.1px;letter-spacing:-0.349px;color:#1c1c1c;transform-origin:0 0;transform:rotate(-90deg) translate(-6.03px,-7.70px)">-13</div>
<svg width="1500" height="844" viewBox="0 0 1500 844" style="left:0;top:0"><defs><clipPath id="cv"><rect x="95" y="155" width="1043" height="577"/></clipPath></defs><g clip-path="url(#cv)">
<line x1="115.5" y1="155" x2="115.5" y2="732" stroke="#232323" stroke-width="1"/>
<line x1="478.5" y1="155" x2="478.5" y2="732" stroke="#232323" stroke-width="1"/>
<line x1="842.5" y1="155" x2="842.5" y2="732" stroke="#232323" stroke-width="1"/>
<line x1="95" y1="255.5" x2="1138" y2="255.5" stroke="#232323" stroke-width="1"/>
<line x1="95" y1="618.5" x2="1138" y2="618.5" stroke="#232323" stroke-width="1"/>
<path d="M115,182h1v1h-1zM115,218h1v1h-1zM115,255h1v1h-1zM115,291h1v1h-1zM115,327h1v1h-1zM115,364h1v1h-1zM115,400h1v1h-1zM115,437h1v1h-1zM115,473h1v1h-1zM115,509h1v1h-1zM115,546h1v1h-1zM115,582h1v1h-1zM115,618h1v1h-1zM115,655h1v1h-1zM115,691h1v1h-1zM115,728h1v1h-1zM151,182h1v1h-1zM151,218h1v1h-1zM151,255h1v1h-1zM151,291h1v1h-1zM151,327h1v1h-1zM151,364h1v1h-1zM151,400h1v1h-1zM151,437h1v1h-1zM151,473h1v1h-1zM151,509h1v1h-1zM151,546h1v1h-1zM151,582h1v1h-1zM151,618h1v1h-1zM151,655h1v1h-1zM151,691h1v1h-1zM151,728h1v1h-1zM187,182h1v1h-1zM187,218h1v1h-1zM187,255h1v1h-1zM187,291h1v1h-1zM187,327h1v1h-1zM187,364h1v1h-1zM187,400h1v1h-1zM187,437h1v1h-1zM187,473h1v1h-1zM187,509h1v1h-1zM187,546h1v1h-1zM187,582h1v1h-1zM187,618h1v1h-1zM187,655h1v1h-1zM187,691h1v1h-1zM187,728h1v1h-1zM224,182h1v1h-1zM224,218h1v1h-1zM224,255h1v1h-1zM224,291h1v1h-1zM224,327h1v1h-1zM224,364h1v1h-1zM224,400h1v1h-1zM224,437h1v1h-1zM224,473h1v1h-1zM224,509h1v1h-1zM224,546h1v1h-1zM224,582h1v1h-1zM224,618h1v1h-1zM224,655h1v1h-1zM224,691h1v1h-1zM224,728h1v1h-1zM260,182h1v1h-1zM260,218h1v1h-1zM260,255h1v1h-1zM260,291h1v1h-1zM260,327h1v1h-1zM260,364h1v1h-1zM260,400h1v1h-1zM260,437h1v1h-1zM260,473h1v1h-1zM260,509h1v1h-1zM260,546h1v1h-1zM260,582h1v1h-1zM260,618h1v1h-1zM260,655h1v1h-1zM260,691h1v1h-1zM260,728h1v1h-1zM297,182h1v1h-1zM297,218h1v1h-1zM297,255h1v1h-1zM297,291h1v1h-1zM297,327h1v1h-1zM297,364h1v1h-1zM297,400h1v1h-1zM297,437h1v1h-1zM297,473h1v1h-1zM297,509h1v1h-1zM297,546h1v1h-1zM297,582h1v1h-1zM297,618h1v1h-1zM297,655h1v1h-1zM297,691h1v1h-1zM297,728h1v1h-1zM333,182h1v1h-1zM333,218h1v1h-1zM333,255h1v1h-1zM333,291h1v1h-1zM333,327h1v1h-1zM333,364h1v1h-1zM333,400h1v1h-1zM333,437h1v1h-1zM333,473h1v1h-1zM333,509h1v1h-1zM333,546h1v1h-1zM333,582h1v1h-1zM333,618h1v1h-1zM333,655h1v1h-1zM333,691h1v1h-1zM333,728h1v1h-1zM369,182h1v1h-1zM369,218h1v1h-1zM369,255h1v1h-1zM369,291h1v1h-1zM369,327h1v1h-1zM369,364h1v1h-1zM369,400h1v1h-1zM369,437h1v1h-1zM369,473h1v1h-1zM369,509h1v1h-1zM369,546h1v1h-1zM369,582h1v1h-1zM369,618h1v1h-1zM369,655h1v1h-1zM369,691h1v1h-1zM369,728h1v1h-1zM406,182h1v1h-1zM406,218h1v1h-1zM406,255h1v1h-1zM406,291h1v1h-1zM406,327h1v1h-1zM406,364h1v1h-1zM406,400h1v1h-1zM406,437h1v1h-1zM406,473h1v1h-1zM406,509h1v1h-1zM406,546h1v1h-1zM406,582h1v1h-1zM406,618h1v1h-1zM406,655h1v1h-1zM406,691h1v1h-1zM406,728h1v1h-1zM442,182h1v1h-1zM442,218h1v1h-1zM442,255h1v1h-1zM442,291h1v1h-1zM442,327h1v1h-1zM442,364h1v1h-1zM442,400h1v1h-1zM442,437h1v1h-1zM442,473h1v1h-1zM442,509h1v1h-1zM442,546h1v1h-1zM442,582h1v1h-1zM442,618h1v1h-1zM442,655h1v1h-1zM442,691h1v1h-1zM442,728h1v1h-1zM478,182h1v1h-1zM478,218h1v1h-1zM478,255h1v1h-1zM478,291h1v1h-1zM478,327h1v1h-1zM478,364h1v1h-1zM478,400h1v1h-1zM478,437h1v1h-1zM478,473h1v1h-1zM478,509h1v1h-1zM478,546h1v1h-1zM478,582h1v1h-1zM478,618h1v1h-1zM478,655h1v1h-1zM478,691h1v1h-1zM478,728h1v1h-1zM515,182h1v1h-1zM515,218h1v1h-1zM515,255h1v1h-1zM515,291h1v1h-1zM515,327h1v1h-1zM515,364h1v1h-1zM515,400h1v1h-1zM515,437h1v1h-1zM515,473h1v1h-1zM515,509h1v1h-1zM515,546h1v1h-1zM515,582h1v1h-1zM515,618h1v1h-1zM515,655h1v1h-1zM515,691h1v1h-1zM515,728h1v1h-1zM551,182h1v1h-1zM551,218h1v1h-1zM551,255h1v1h-1zM551,291h1v1h-1zM551,327h1v1h-1zM551,364h1v1h-1zM551,400h1v1h-1zM551,437h1v1h-1zM551,473h1v1h-1zM551,509h1v1h-1zM551,546h1v1h-1zM551,582h1v1h-1zM551,618h1v1h-1zM551,655h1v1h-1zM551,691h1v1h-1zM551,728h1v1h-1zM588,182h1v1h-1zM588,218h1v1h-1zM588,255h1v1h-1zM588,291h1v1h-1zM588,327h1v1h-1zM588,364h1v1h-1zM588,400h1v1h-1zM588,437h1v1h-1zM588,473h1v1h-1zM588,509h1v1h-1zM588,546h1v1h-1zM588,582h1v1h-1zM588,618h1v1h-1zM588,655h1v1h-1zM588,691h1v1h-1zM588,728h1v1h-1zM624,182h1v1h-1zM624,218h1v1h-1zM624,255h1v1h-1zM624,291h1v1h-1zM624,327h1v1h-1zM624,364h1v1h-1zM624,400h1v1h-1zM624,437h1v1h-1zM624,473h1v1h-1zM624,509h1v1h-1zM624,546h1v1h-1zM624,582h1v1h-1zM624,618h1v1h-1zM624,655h1v1h-1zM624,691h1v1h-1zM624,728h1v1h-1zM660,182h1v1h-1zM660,218h1v1h-1zM660,255h1v1h-1zM660,291h1v1h-1zM660,327h1v1h-1zM660,364h1v1h-1zM660,400h1v1h-1zM660,437h1v1h-1zM660,473h1v1h-1zM660,509h1v1h-1zM660,546h1v1h-1zM660,582h1v1h-1zM660,618h1v1h-1zM660,655h1v1h-1zM660,691h1v1h-1zM660,728h1v1h-1zM697,182h1v1h-1zM697,218h1v1h-1zM697,255h1v1h-1zM697,291h1v1h-1zM697,327h1v1h-1zM697,364h1v1h-1zM697,400h1v1h-1zM697,437h1v1h-1zM697,473h1v1h-1zM697,509h1v1h-1zM697,546h1v1h-1zM697,582h1v1h-1zM697,618h1v1h-1zM697,655h1v1h-1zM697,691h1v1h-1zM697,728h1v1h-1zM733,182h1v1h-1zM733,218h1v1h-1zM733,255h1v1h-1zM733,291h1v1h-1zM733,327h1v1h-1zM733,364h1v1h-1zM733,400h1v1h-1zM733,437h1v1h-1zM733,473h1v1h-1zM733,509h1v1h-1zM733,546h1v1h-1zM733,582h1v1h-1zM733,618h1v1h-1zM733,655h1v1h-1zM733,691h1v1h-1zM733,728h1v1h-1zM769,182h1v1h-1zM769,218h1v1h-1zM769,255h1v1h-1zM769,291h1v1h-1zM769,327h1v1h-1zM769,364h1v1h-1zM769,400h1v1h-1zM769,437h1v1h-1zM769,473h1v1h-1zM769,509h1v1h-1zM769,546h1v1h-1zM769,582h1v1h-1zM769,618h1v1h-1zM769,655h1v1h-1zM769,691h1v1h-1zM769,728h1v1h-1zM806,182h1v1h-1zM806,218h1v1h-1zM806,255h1v1h-1zM806,291h1v1h-1zM806,327h1v1h-1zM806,364h1v1h-1zM806,400h1v1h-1zM806,437h1v1h-1zM806,473h1v1h-1zM806,509h1v1h-1zM806,546h1v1h-1zM806,582h1v1h-1zM806,618h1v1h-1zM806,655h1v1h-1zM806,691h1v1h-1zM806,728h1v1h-1zM842,182h1v1h-1zM842,218h1v1h-1zM842,255h1v1h-1zM842,291h1v1h-1zM842,327h1v1h-1zM842,364h1v1h-1zM842,400h1v1h-1zM842,437h1v1h-1zM842,473h1v1h-1zM842,509h1v1h-1zM842,546h1v1h-1zM842,582h1v1h-1zM842,618h1v1h-1zM842,655h1v1h-1zM842,691h1v1h-1zM842,728h1v1h-1zM878,182h1v1h-1zM878,218h1v1h-1zM878,255h1v1h-1zM878,291h1v1h-1zM878,327h1v1h-1zM878,364h1v1h-1zM878,400h1v1h-1zM878,437h1v1h-1zM878,473h1v1h-1zM878,509h1v1h-1zM878,546h1v1h-1zM878,582h1v1h-1zM878,618h1v1h-1zM878,655h1v1h-1zM878,691h1v1h-1zM878,728h1v1h-1zM915,182h1v1h-1zM915,218h1v1h-1zM915,255h1v1h-1zM915,291h1v1h-1zM915,327h1v1h-1zM915,364h1v1h-1zM915,400h1v1h-1zM915,437h1v1h-1zM915,473h1v1h-1zM915,509h1v1h-1zM915,546h1v1h-1zM915,582h1v1h-1zM915,618h1v1h-1zM915,655h1v1h-1zM915,691h1v1h-1zM915,728h1v1h-1zM951,182h1v1h-1zM951,218h1v1h-1zM951,255h1v1h-1zM951,291h1v1h-1zM951,327h1v1h-1zM951,364h1v1h-1zM951,400h1v1h-1zM951,437h1v1h-1zM951,473h1v1h-1zM951,509h1v1h-1zM951,546h1v1h-1zM951,582h1v1h-1zM951,618h1v1h-1zM951,655h1v1h-1zM951,691h1v1h-1zM951,728h1v1h-1zM988,182h1v1h-1zM988,218h1v1h-1zM988,255h1v1h-1zM988,291h1v1h-1zM988,327h1v1h-1zM988,364h1v1h-1zM988,400h1v1h-1zM988,437h1v1h-1zM988,473h1v1h-1zM988,509h1v1h-1zM988,546h1v1h-1zM988,582h1v1h-1zM988,618h1v1h-1zM988,655h1v1h-1zM988,691h1v1h-1zM988,728h1v1h-1zM1024,182h1v1h-1zM1024,218h1v1h-1zM1024,255h1v1h-1zM1024,291h1v1h-1zM1024,327h1v1h-1zM1024,364h1v1h-1zM1024,400h1v1h-1zM1024,437h1v1h-1zM1024,473h1v1h-1zM1024,509h1v1h-1zM1024,546h1v1h-1zM1024,582h1v1h-1zM1024,618h1v1h-1zM1024,655h1v1h-1zM1024,691h1v1h-1zM1024,728h1v1h-1zM1060,182h1v1h-1zM1060,218h1v1h-1zM1060,255h1v1h-1zM1060,291h1v1h-1zM1060,327h1v1h-1zM1060,364h1v1h-1zM1060,400h1v1h-1zM1060,437h1v1h-1zM1060,473h1v1h-1zM1060,509h1v1h-1zM1060,546h1v1h-1zM1060,582h1v1h-1zM1060,618h1v1h-1zM1060,655h1v1h-1zM1060,691h1v1h-1zM1060,728h1v1h-1zM1097,182h1v1h-1zM1097,218h1v1h-1zM1097,255h1v1h-1zM1097,291h1v1h-1zM1097,327h1v1h-1zM1097,364h1v1h-1zM1097,400h1v1h-1zM1097,437h1v1h-1zM1097,473h1v1h-1zM1097,509h1v1h-1zM1097,546h1v1h-1zM1097,582h1v1h-1zM1097,618h1v1h-1zM1097,655h1v1h-1zM1097,691h1v1h-1zM1097,728h1v1h-1zM1133,182h1v1h-1zM1133,218h1v1h-1zM1133,255h1v1h-1zM1133,291h1v1h-1zM1133,327h1v1h-1zM1133,364h1v1h-1zM1133,400h1v1h-1zM1133,437h1v1h-1zM1133,473h1v1h-1zM1133,509h1v1h-1zM1133,546h1v1h-1zM1133,582h1v1h-1zM1133,618h1v1h-1zM1133,655h1v1h-1zM1133,691h1v1h-1zM1133,728h1v1h-1z" fill="#454545"/>
<rect x="478.8" y="254.8" width="232.99999999999994" height="334.8" fill="#a0a0a4"/>
<rect x="485" y="261" width="105.20" height="154.00" fill="#000033"/>
<rect x="596.7" y="261" width="108.70" height="105.40" fill="#000033"/>
<rect x="649" y="366" width="56.40" height="63.30" fill="#000033"/>
<rect x="596.7" y="372.8" width="45.90" height="210.60" fill="#000033"/>
<rect x="485" y="421.3" width="105.20" height="114.70" fill="#000033"/>
<rect x="485" y="542.3" width="105.20" height="41.10" fill="#000033"/>
<rect x="649" y="435.8" width="56.40" height="75.90" fill="#000033"/>
<rect x="642.6" y="518" width="62.80" height="29.50" fill="#000"/>
<rect x="649" y="553.9" width="56.40" height="29.50" fill="#000"/>
<rect x="676.2" y="547" width="29.20" height="8" fill="#000"/>
<path d="M115,182h1v1h-1zM115,218h1v1h-1zM115,255h1v1h-1zM115,291h1v1h-1zM115,327h1v1h-1zM115,364h1v1h-1zM115,400h1v1h-1zM115,437h1v1h-1zM115,473h1v1h-1zM115,509h1v1h-1zM115,546h1v1h-1zM115,582h1v1h-1zM115,618h1v1h-1zM115,655h1v1h-1zM115,691h1v1h-1zM115,728h1v1h-1zM151,182h1v1h-1zM151,218h1v1h-1zM151,255h1v1h-1zM151,291h1v1h-1zM151,327h1v1h-1zM151,364h1v1h-1zM151,400h1v1h-1zM151,437h1v1h-1zM151,473h1v1h-1zM151,509h1v1h-1zM151,546h1v1h-1zM151,582h1v1h-1zM151,618h1v1h-1zM151,655h1v1h-1zM151,691h1v1h-1zM151,728h1v1h-1zM187,182h1v1h-1zM187,218h1v1h-1zM187,255h1v1h-1zM187,291h1v1h-1zM187,327h1v1h-1zM187,364h1v1h-1zM187,400h1v1h-1zM187,437h1v1h-1zM187,473h1v1h-1zM187,509h1v1h-1zM187,546h1v1h-1zM187,582h1v1h-1zM187,618h1v1h-1zM187,655h1v1h-1zM187,691h1v1h-1zM187,728h1v1h-1zM224,182h1v1h-1zM224,218h1v1h-1zM224,255h1v1h-1zM224,291h1v1h-1zM224,327h1v1h-1zM224,364h1v1h-1zM224,400h1v1h-1zM224,437h1v1h-1zM224,473h1v1h-1zM224,509h1v1h-1zM224,546h1v1h-1zM224,582h1v1h-1zM224,618h1v1h-1zM224,655h1v1h-1zM224,691h1v1h-1zM224,728h1v1h-1zM260,182h1v1h-1zM260,218h1v1h-1zM260,255h1v1h-1zM260,291h1v1h-1zM260,327h1v1h-1zM260,364h1v1h-1zM260,400h1v1h-1zM260,437h1v1h-1zM260,473h1v1h-1zM260,509h1v1h-1zM260,546h1v1h-1zM260,582h1v1h-1zM260,618h1v1h-1zM260,655h1v1h-1zM260,691h1v1h-1zM260,728h1v1h-1zM297,182h1v1h-1zM297,218h1v1h-1zM297,255h1v1h-1zM297,291h1v1h-1zM297,327h1v1h-1zM297,364h1v1h-1zM297,400h1v1h-1zM297,437h1v1h-1zM297,473h1v1h-1zM297,509h1v1h-1zM297,546h1v1h-1zM297,582h1v1h-1zM297,618h1v1h-1zM297,655h1v1h-1zM297,691h1v1h-1zM297,728h1v1h-1zM333,182h1v1h-1zM333,218h1v1h-1zM333,255h1v1h-1zM333,291h1v1h-1zM333,327h1v1h-1zM333,364h1v1h-1zM333,400h1v1h-1zM333,437h1v1h-1zM333,473h1v1h-1zM333,509h1v1h-1zM333,546h1v1h-1zM333,582h1v1h-1zM333,618h1v1h-1zM333,655h1v1h-1zM333,691h1v1h-1zM333,728h1v1h-1zM369,182h1v1h-1zM369,218h1v1h-1zM369,255h1v1h-1zM369,291h1v1h-1zM369,327h1v1h-1zM369,364h1v1h-1zM369,400h1v1h-1zM369,437h1v1h-1zM369,473h1v1h-1zM369,509h1v1h-1zM369,546h1v1h-1zM369,582h1v1h-1zM369,618h1v1h-1zM369,655h1v1h-1zM369,691h1v1h-1zM369,728h1v1h-1zM406,182h1v1h-1zM406,218h1v1h-1zM406,255h1v1h-1zM406,291h1v1h-1zM406,327h1v1h-1zM406,364h1v1h-1zM406,400h1v1h-1zM406,437h1v1h-1zM406,473h1v1h-1zM406,509h1v1h-1zM406,546h1v1h-1zM406,582h1v1h-1zM406,618h1v1h-1zM406,655h1v1h-1zM406,691h1v1h-1zM406,728h1v1h-1zM442,182h1v1h-1zM442,218h1v1h-1zM442,255h1v1h-1zM442,291h1v1h-1zM442,327h1v1h-1zM442,364h1v1h-1zM442,400h1v1h-1zM442,437h1v1h-1zM442,473h1v1h-1zM442,509h1v1h-1zM442,546h1v1h-1zM442,582h1v1h-1zM442,618h1v1h-1zM442,655h1v1h-1zM442,691h1v1h-1zM442,728h1v1h-1zM478,182h1v1h-1zM478,218h1v1h-1zM478,255h1v1h-1zM478,291h1v1h-1zM478,327h1v1h-1zM478,364h1v1h-1zM478,400h1v1h-1zM478,437h1v1h-1zM478,473h1v1h-1zM478,509h1v1h-1zM478,546h1v1h-1zM478,582h1v1h-1zM478,618h1v1h-1zM478,655h1v1h-1zM478,691h1v1h-1zM478,728h1v1h-1zM515,182h1v1h-1zM515,218h1v1h-1zM515,255h1v1h-1zM515,291h1v1h-1zM515,327h1v1h-1zM515,364h1v1h-1zM515,400h1v1h-1zM515,437h1v1h-1zM515,473h1v1h-1zM515,509h1v1h-1zM515,546h1v1h-1zM515,582h1v1h-1zM515,618h1v1h-1zM515,655h1v1h-1zM515,691h1v1h-1zM515,728h1v1h-1zM551,182h1v1h-1zM551,218h1v1h-1zM551,255h1v1h-1zM551,291h1v1h-1zM551,327h1v1h-1zM551,364h1v1h-1zM551,400h1v1h-1zM551,437h1v1h-1zM551,473h1v1h-1zM551,509h1v1h-1zM551,546h1v1h-1zM551,582h1v1h-1zM551,618h1v1h-1zM551,655h1v1h-1zM551,691h1v1h-1zM551,728h1v1h-1zM588,182h1v1h-1zM588,218h1v1h-1zM588,255h1v1h-1zM588,291h1v1h-1zM588,327h1v1h-1zM588,364h1v1h-1zM588,400h1v1h-1zM588,437h1v1h-1zM588,473h1v1h-1zM588,509h1v1h-1zM588,546h1v1h-1zM588,582h1v1h-1zM588,618h1v1h-1zM588,655h1v1h-1zM588,691h1v1h-1zM588,728h1v1h-1zM624,182h1v1h-1zM624,218h1v1h-1zM624,255h1v1h-1zM624,291h1v1h-1zM624,327h1v1h-1zM624,364h1v1h-1zM624,400h1v1h-1zM624,437h1v1h-1zM624,473h1v1h-1zM624,509h1v1h-1zM624,546h1v1h-1zM624,582h1v1h-1zM624,618h1v1h-1zM624,655h1v1h-1zM624,691h1v1h-1zM624,728h1v1h-1zM660,182h1v1h-1zM660,218h1v1h-1zM660,255h1v1h-1zM660,291h1v1h-1zM660,327h1v1h-1zM660,364h1v1h-1zM660,400h1v1h-1zM660,437h1v1h-1zM660,473h1v1h-1zM660,509h1v1h-1zM660,546h1v1h-1zM660,582h1v1h-1zM660,618h1v1h-1zM660,655h1v1h-1zM660,691h1v1h-1zM660,728h1v1h-1zM697,182h1v1h-1zM697,218h1v1h-1zM697,255h1v1h-1zM697,291h1v1h-1zM697,327h1v1h-1zM697,364h1v1h-1zM697,400h1v1h-1zM697,437h1v1h-1zM697,473h1v1h-1zM697,509h1v1h-1zM697,546h1v1h-1zM697,582h1v1h-1zM697,618h1v1h-1zM697,655h1v1h-1zM697,691h1v1h-1zM697,728h1v1h-1zM733,182h1v1h-1zM733,218h1v1h-1zM733,255h1v1h-1zM733,291h1v1h-1zM733,327h1v1h-1zM733,364h1v1h-1zM733,400h1v1h-1zM733,437h1v1h-1zM733,473h1v1h-1zM733,509h1v1h-1zM733,546h1v1h-1zM733,582h1v1h-1zM733,618h1v1h-1zM733,655h1v1h-1zM733,691h1v1h-1zM733,728h1v1h-1zM769,182h1v1h-1zM769,218h1v1h-1zM769,255h1v1h-1zM769,291h1v1h-1zM769,327h1v1h-1zM769,364h1v1h-1zM769,400h1v1h-1zM769,437h1v1h-1zM769,473h1v1h-1zM769,509h1v1h-1zM769,546h1v1h-1zM769,582h1v1h-1zM769,618h1v1h-1zM769,655h1v1h-1zM769,691h1v1h-1zM769,728h1v1h-1zM806,182h1v1h-1zM806,218h1v1h-1zM806,255h1v1h-1zM806,291h1v1h-1zM806,327h1v1h-1zM806,364h1v1h-1zM806,400h1v1h-1zM806,437h1v1h-1zM806,473h1v1h-1zM806,509h1v1h-1zM806,546h1v1h-1zM806,582h1v1h-1zM806,618h1v1h-1zM806,655h1v1h-1zM806,691h1v1h-1zM806,728h1v1h-1zM842,182h1v1h-1zM842,218h1v1h-1zM842,255h1v1h-1zM842,291h1v1h-1zM842,327h1v1h-1zM842,364h1v1h-1zM842,400h1v1h-1zM842,437h1v1h-1zM842,473h1v1h-1zM842,509h1v1h-1zM842,546h1v1h-1zM842,582h1v1h-1zM842,618h1v1h-1zM842,655h1v1h-1zM842,691h1v1h-1zM842,728h1v1h-1zM878,182h1v1h-1zM878,218h1v1h-1zM878,255h1v1h-1zM878,291h1v1h-1zM878,327h1v1h-1zM878,364h1v1h-1zM878,400h1v1h-1zM878,437h1v1h-1zM878,473h1v1h-1zM878,509h1v1h-1zM878,546h1v1h-1zM878,582h1v1h-1zM878,618h1v1h-1zM878,655h1v1h-1zM878,691h1v1h-1zM878,728h1v1h-1zM915,182h1v1h-1zM915,218h1v1h-1zM915,255h1v1h-1zM915,291h1v1h-1zM915,327h1v1h-1zM915,364h1v1h-1zM915,400h1v1h-1zM915,437h1v1h-1zM915,473h1v1h-1zM915,509h1v1h-1zM915,546h1v1h-1zM915,582h1v1h-1zM915,618h1v1h-1zM915,655h1v1h-1zM915,691h1v1h-1zM915,728h1v1h-1zM951,182h1v1h-1zM951,218h1v1h-1zM951,255h1v1h-1zM951,291h1v1h-1zM951,327h1v1h-1zM951,364h1v1h-1zM951,400h1v1h-1zM951,437h1v1h-1zM951,473h1v1h-1zM951,509h1v1h-1zM951,546h1v1h-1zM951,582h1v1h-1zM951,618h1v1h-1zM951,655h1v1h-1zM951,691h1v1h-1zM951,728h1v1h-1zM988,182h1v1h-1zM988,218h1v1h-1zM988,255h1v1h-1zM988,291h1v1h-1zM988,327h1v1h-1zM988,364h1v1h-1zM988,400h1v1h-1zM988,437h1v1h-1zM988,473h1v1h-1zM988,509h1v1h-1zM988,546h1v1h-1zM988,582h1v1h-1zM988,618h1v1h-1zM988,655h1v1h-1zM988,691h1v1h-1zM988,728h1v1h-1zM1024,182h1v1h-1zM1024,218h1v1h-1zM1024,255h1v1h-1zM1024,291h1v1h-1zM1024,327h1v1h-1zM1024,364h1v1h-1zM1024,400h1v1h-1zM1024,437h1v1h-1zM1024,473h1v1h-1zM1024,509h1v1h-1zM1024,546h1v1h-1zM1024,582h1v1h-1zM1024,618h1v1h-1zM1024,655h1v1h-1zM1024,691h1v1h-1zM1024,728h1v1h-1zM1060,182h1v1h-1zM1060,218h1v1h-1zM1060,255h1v1h-1zM1060,291h1v1h-1zM1060,327h1v1h-1zM1060,364h1v1h-1zM1060,400h1v1h-1zM1060,437h1v1h-1zM1060,473h1v1h-1zM1060,509h1v1h-1zM1060,546h1v1h-1zM1060,582h1v1h-1zM1060,618h1v1h-1zM1060,655h1v1h-1zM1060,691h1v1h-1zM1060,728h1v1h-1zM1097,182h1v1h-1zM1097,218h1v1h-1zM1097,255h1v1h-1zM1097,291h1v1h-1zM1097,327h1v1h-1zM1097,364h1v1h-1zM1097,400h1v1h-1zM1097,437h1v1h-1zM1097,473h1v1h-1zM1097,509h1v1h-1zM1097,546h1v1h-1zM1097,582h1v1h-1zM1097,618h1v1h-1zM1097,655h1v1h-1zM1097,691h1v1h-1zM1097,728h1v1h-1zM1133,182h1v1h-1zM1133,218h1v1h-1zM1133,255h1v1h-1zM1133,291h1v1h-1zM1133,327h1v1h-1zM1133,364h1v1h-1zM1133,400h1v1h-1zM1133,437h1v1h-1zM1133,473h1v1h-1zM1133,509h1v1h-1zM1133,546h1v1h-1zM1133,582h1v1h-1zM1133,618h1v1h-1zM1133,655h1v1h-1zM1133,691h1v1h-1zM1133,728h1v1h-1z" fill="#fff" opacity="0.27" clip-path="url(#fp)"/><clipPath id="fp"><rect x="478.8" y="254.8" width="232.99999999999994" height="334.8"/></clipPath>
<rect x="486.5" y="263.5" width="34.0" height="73.0" rx="1.5" fill="none" stroke="#8686a2" stroke-width="1"/>
<rect x="492.5" y="266.5" width="23.0" height="12.0" rx="2.5" fill="none" stroke="#8686a2" stroke-width="1"/>
<path d="M506.2,282.5 L520.0,282.5" fill="none" stroke="#8686a2" stroke-width="1" stroke-linejoin="round"/>
<path d="M506.2,285.5 L520.0,285.5" fill="none" stroke="#8686a2" stroke-width="1" stroke-linejoin="round"/>
<path d="M487.2,294.0 L505.0,281.6 L506.8,283.6 L499.2,303.6 L487.6,300.4" fill="none" stroke="#8686a2" stroke-width="1" stroke-linejoin="round"/>
<path d="M503.4,283.0 L496.2,302.6" fill="none" stroke="#8686a2" stroke-width="1" stroke-linejoin="round"/>
<rect x="555.5" y="263.5" width="33.0" height="73.0" rx="1.5" fill="none" stroke="#8686a2" stroke-width="1"/>
<rect x="560.5" y="266.5" width="22.0" height="12.0" rx="2.5" fill="none" stroke="#8686a2" stroke-width="1"/>
<path d="M574.7,282.5 L588.7,282.5" fill="none" stroke="#8686a2" stroke-width="1" stroke-linejoin="round"/>
<path d="M574.7,285.5 L588.7,285.5" fill="none" stroke="#8686a2" stroke-width="1" stroke-linejoin="round"/>
<path d="M555.7,294.0 L573.5,281.6 L575.3,283.6 L567.7,303.6 L556.1,300.4" fill="none" stroke="#8686a2" stroke-width="1" stroke-linejoin="round"/>
<path d="M571.9,283.0 L564.7,302.6" fill="none" stroke="#8686a2" stroke-width="1" stroke-linejoin="round"/>
<rect x="521.5" y="263.5" width="14.0" height="14.0" rx="0" fill="none" stroke="#8686a2" stroke-width="1"/>
<rect x="539.5" y="263.5" width="15.0" height="14.0" rx="0" fill="none" stroke="#8686a2" stroke-width="1"/>
<rect x="517.5" y="400.5" width="35.0" height="15.0" rx="0" fill="none" stroke="#8686a2" stroke-width="1"/>
<rect x="599.5" y="260.5" width="103.0" height="14.0" rx="0" fill="none" stroke="#8686a2" stroke-width="1"/>
<rect x="669.5" y="351.5" width="33.0" height="73.0" rx="1.5" fill="none" stroke="#8686a2" stroke-width="1"/>
<rect x="674.5" y="410.5" width="22.0" height="11.0" rx="2.5" fill="none" stroke="#8686a2" stroke-width="1"/>
<path d="M669.3,402.5 L684.6,402.5" fill="none" stroke="#8686a2" stroke-width="1" stroke-linejoin="round"/>
<path d="M669.3,405.5 L684.0,405.5" fill="none" stroke="#8686a2" stroke-width="1" stroke-linejoin="round"/>
<path d="M684.0,406.4 L701.5,395.4 L701.5,387.0 L691.4,384.2 L685.0,403.6" fill="none" stroke="#8686a2" stroke-width="1" stroke-linejoin="round"/>
<path d="M694.0,385.0 L687.6,404.2" fill="none" stroke="#8686a2" stroke-width="1" stroke-linejoin="round"/>
<rect x="651.5" y="410.5" width="15.0" height="14.0" rx="0" fill="none" stroke="#8686a2" stroke-width="1"/>
<rect x="488.5" y="424.5" width="15.0" height="15.0" rx="0" fill="none" stroke="#8686a2" stroke-width="1"/>
<rect x="573.5" y="424.5" width="15.0" height="15.0" rx="0" fill="none" stroke="#8686a2" stroke-width="1"/>
<rect x="505.5" y="424.5" width="66.0" height="73.0" rx="1.5" fill="none" stroke="#8686a2" stroke-width="1"/>
<rect x="511.5" y="427.5" width="22.0" height="12.0" rx="2.5" fill="none" stroke="#8686a2" stroke-width="1"/>
<rect x="543.5" y="427.5" width="22.0" height="12.0" rx="2.5" fill="none" stroke="#8686a2" stroke-width="1"/>
<path d="M540.0,442.5 L571.5,442.5" fill="none" stroke="#8686a2" stroke-width="1" stroke-linejoin="round"/>
<path d="M540.0,446.5 L571.5,446.5" fill="none" stroke="#8686a2" stroke-width="1" stroke-linejoin="round"/>
<path d="M540.0,450.5 L571.5,450.5" fill="none" stroke="#8686a2" stroke-width="1" stroke-linejoin="round"/>
<path d="M505.5,466.8 L538.2,444.1 L540.6,449.8 L529.7,478.2 L506.0,472.5" fill="none" stroke="#8686a2" stroke-width="1" stroke-linejoin="round"/>
<path d="M535.4,446.2 L525.6,477.0" fill="none" stroke="#8686a2" stroke-width="1" stroke-linejoin="round"/>
<rect x="556.5" y="549.5" width="34.0" height="34.0" rx="0" fill="none" stroke="#8686a2" stroke-width="1"/>
<rect x="557.5" y="551.5" width="32.0" height="31.0" rx="0" fill="none" stroke="#8686a2" stroke-width="1"/>
<path d="M560.8,579.0 L581.0,559.0" fill="none" stroke="#8686a2" stroke-width="1" stroke-linejoin="round"/>
<path d="M560.8,554.5 L581.0,554.5" fill="none" stroke="#8686a2" stroke-width="1" stroke-linejoin="round"/>
<path d="M585.5,559.0 L585.5,579.0" fill="none" stroke="#8686a2" stroke-width="1" stroke-linejoin="round"/>
<circle cx="585.4" cy="554.4" r="1.2" fill="none" stroke="#8686a2" stroke-width="0.7"/><circle cx="573.4" cy="575.8" r="1.4" fill="none" stroke="#8686a2" stroke-width="0.7"/><line x1="573.4" y1="577.2" x2="573.4" y2="583" stroke="#8686a2" stroke-width="0.8"/>
<clipPath id="b1c"><rect x="485" y="542" width="105" height="41.4"/></clipPath><g clip-path="url(#b1c)"><ellipse cx="522.4" cy="579.4" rx="10.2" ry="10.2" fill="none" stroke="#8686a2" stroke-width="0.9"/><ellipse cx="522.4" cy="576.6" rx="8.6" ry="4.4" fill="none" stroke="#8686a2" stroke-width="0.8"/><path d="M522.4,574 L522.4,583 M520.8,575.4 L524,575.4 M512.4,582.4 L532.4,582.4" stroke="#8686a2" stroke-width="0.8"/></g>
<clipPath id="b2c"><rect x="649" y="435.8" width="56.4" height="76"/></clipPath><g clip-path="url(#b2c)"><ellipse cx="668" cy="435.8" rx="9.9" ry="14.2" fill="none" stroke="#8686a2" stroke-width="0.9"/><ellipse cx="668" cy="442.4" rx="7.4" ry="5.4" fill="none" stroke="#8686a2" stroke-width="0.8"/><path d="M668,436.6 L668,444 M666.6,439.2 L669.4,439.2" stroke="#8686a2" stroke-width="0.8"/></g>
<ellipse cx="691" cy="461.2" rx="10" ry="6.8" fill="none" stroke="#8686a2" stroke-width="0.9"/><ellipse cx="691.2" cy="461.4" rx="7.5" ry="4.9" fill="none" stroke="#8686a2" stroke-width="0.8"/>
<rect x="700.5" y="454.5" width="5.0" height="14.0" rx="0" fill="none" stroke="#8686a2" stroke-width="1"/>
<path d="M649.0,485.5 L705.4,485.5" fill="none" stroke="#8686a2" stroke-width="1" stroke-linejoin="round"/>
<rect x="650.5" y="487.5" width="54.0" height="23.0" rx="7" fill="none" stroke="#8686a2" stroke-width="1"/>
<path d="M699,498.6 L704,498.6 M703.4,494.6 L703.4,502.4" stroke="#8686a2" stroke-width="0.8"/><circle cx="698.2" cy="498.6" r="1" fill="#8686a2"/>
<path d="M643.6,520.5 L704.5,520.5 L704.5,581.5 L649.5,581.5 L649.5,555.5 L676.2,555.5" fill="none" stroke="#8e8e8e" stroke-width="1" stroke-linejoin="round"/>
<path d="M643.5,520.4 L643.5,545.5 L676.2,545.5" fill="none" stroke="#8e8e8e" stroke-width="1" stroke-linejoin="round"/>
<path d="M654.5,520.4 L654.5,545.4" fill="none" stroke="#8e8e8e" stroke-width="1" stroke-linejoin="round"/>
<path d="M654.5,555.9 L654.5,581.2" fill="none" stroke="#8e8e8e" stroke-width="1" stroke-linejoin="round"/>
<path d="M665.5,520.4 L665.5,545.4" fill="none" stroke="#8e8e8e" stroke-width="1" stroke-linejoin="round"/>
<path d="M665.5,555.9 L665.5,581.2" fill="none" stroke="#8e8e8e" stroke-width="1" stroke-linejoin="round"/>
<path d="M675.5,520.4 L675.5,545.4" fill="none" stroke="#8e8e8e" stroke-width="1" stroke-linejoin="round"/>
<path d="M675.5,555.9 L675.5,581.2" fill="none" stroke="#8e8e8e" stroke-width="1" stroke-linejoin="round"/>
<path d="M649.6,532.6 L675.6,532.6 C686,532.6 691,540 691,550.6 C691,561 686,568.5 675.6,568.5 L649.6,568.5" fill="none" stroke="#8e8e8e" stroke-width="0.9"/>
<path d="M677.4,545.4 C680,547 680,554 677.4,555.9" fill="none" stroke="#8e8e8e" stroke-width="0.9"/>
<path d="M678.6,547.0 L692.4,520.4" fill="none" stroke="#8e8e8e" stroke-width="1" stroke-linejoin="round"/>
<path d="M678.6,548.7 L704.0,534.4" fill="none" stroke="#8e8e8e" stroke-width="1" stroke-linejoin="round"/>
<path d="M678.6,550.5 L704.0,550.5" fill="none" stroke="#8e8e8e" stroke-width="1" stroke-linejoin="round"/>
<path d="M678.6,552.6 L704.0,567.5" fill="none" stroke="#8e8e8e" stroke-width="1" stroke-linejoin="round"/>
<path d="M678.6,554.3 L692.4,581.2" fill="none" stroke="#8e8e8e" stroke-width="1" stroke-linejoin="round"/>
<path d="M649.6,532.6 L657.8,531.2 L657.8,534Z" fill="#fff"/>
<rect x="479.20000000000005" y="313.5" width="5.199999999999977" height="33.19999999999999" fill="#000c12"/><rect x="479.5" y="313.5" width="5.0" height="33.0" rx="0" fill="none" stroke="#00a2b6" stroke-width="1"/><path d="M481.5,316.5 L481.5,343.7" fill="none" stroke="#00a2b6" stroke-width="1" stroke-linejoin="round"/><path d="M479.6,316.5 L484.0,316.5" fill="none" stroke="#00a2b6" stroke-width="1" stroke-linejoin="round"/><path d="M479.6,343.5 L484.0,343.5" fill="none" stroke="#00a2b6" stroke-width="1" stroke-linejoin="round"/>
<rect x="706.2" y="313.5" width="5.400000000000023" height="33.19999999999999" fill="#000c12"/><rect x="706.5" y="313.5" width="5.0" height="33.0" rx="0" fill="none" stroke="#00a2b6" stroke-width="1"/><path d="M708.5,316.5 L708.5,343.7" fill="none" stroke="#00a2b6" stroke-width="1" stroke-linejoin="round"/><path d="M706.6,316.5 L711.2,316.5" fill="none" stroke="#00a2b6" stroke-width="1" stroke-linejoin="round"/><path d="M706.6,343.5 L711.2,343.5" fill="none" stroke="#00a2b6" stroke-width="1" stroke-linejoin="round"/>
<rect x="479.20000000000005" y="464" width="5.199999999999977" height="32.80000000000001" fill="#000c12"/><rect x="479.5" y="464.5" width="5.0" height="32.0" rx="0" fill="none" stroke="#00a2b6" stroke-width="1"/><path d="M481.5,467.0 L481.5,493.8" fill="none" stroke="#00a2b6" stroke-width="1" stroke-linejoin="round"/><path d="M479.6,467.5 L484.0,467.5" fill="none" stroke="#00a2b6" stroke-width="1" stroke-linejoin="round"/><path d="M479.6,493.5 L484.0,493.5" fill="none" stroke="#00a2b6" stroke-width="1" stroke-linejoin="round"/>
<rect x="604.8" y="366.4" width="32.40000000000009" height="6.2" fill="#000"/><path d="M604.8,367.5 L637.2,367.5" fill="none" stroke="#00a2b6" stroke-width="1" stroke-linejoin="round"/><path d="M604.8,372.5 L637.2,372.5" fill="none" stroke="#00a2b6" stroke-width="1" stroke-linejoin="round"/><rect x="604.5" y="367.5" width="4.0" height="5.0" rx="0" fill="#007078" stroke="#00a2b6" stroke-width="1"/><rect x="634.5" y="367.5" width="3.0" height="5.0" rx="0" fill="#007078" stroke="#00a2b6" stroke-width="1"/>
<rect x="605.5" y="338.5" width="3.0" height="29.0" rx="0" fill="none" stroke="#00a2b6" stroke-width="1"/>
<path d="M606.6,338.4 A30.4,30.4 0 0 1 636.6,367" fill="none" stroke="#00a2b6" stroke-width="0.9"/>
<rect x="590.4" y="373.6" width="6.2" height="31.599999999999966" fill="#000"/><path d="M591.5,373.6 L591.5,405.2" fill="none" stroke="#00a2b6" stroke-width="1" stroke-linejoin="round"/><path d="M596.5,373.6 L596.5,405.2" fill="none" stroke="#00a2b6" stroke-width="1" stroke-linejoin="round"/><rect x="591.5" y="373.5" width="5.0" height="3.0" rx="0" fill="#007078" stroke="#00a2b6" stroke-width="1"/><rect x="591.5" y="402.5" width="5.0" height="3.0" rx="0" fill="#007078" stroke="#00a2b6" stroke-width="1"/>
<rect x="562.5" y="402.5" width="29.0" height="2.0" rx="0" fill="none" stroke="#00a2b6" stroke-width="1"/>
<path d="M562.4,403.4 A29.6,29.6 0 0 1 591,374.4" fill="none" stroke="#00a2b6" stroke-width="0.9"/>
<rect x="590.4" y="503.4" width="6.2" height="31.800000000000068" fill="#000"/><path d="M591.5,503.4 L591.5,535.2" fill="none" stroke="#00a2b6" stroke-width="1" stroke-linejoin="round"/><path d="M596.5,503.4 L596.5,535.2" fill="none" stroke="#00a2b6" stroke-width="1" stroke-linejoin="round"/><rect x="591.5" y="503.5" width="5.0" height="3.0" rx="0" fill="#007078" stroke="#00a2b6" stroke-width="1"/><rect x="591.5" y="532.5" width="5.0" height="3.0" rx="0" fill="#007078" stroke="#00a2b6" stroke-width="1"/>
<rect x="562.5" y="531.5" width="29.0" height="3.0" rx="0" fill="none" stroke="#00a2b6" stroke-width="1"/>
<path d="M562.4,533.2 A29.4,29.4 0 0 1 591,504.4" fill="none" stroke="#00a2b6" stroke-width="0.9"/>
<rect x="642.6" y="449" width="6.399999999999932" height="33.60000000000002" fill="#000"/><path d="M643.5,449.0 L643.5,482.6" fill="none" stroke="#00a2b6" stroke-width="1" stroke-linejoin="round"/><path d="M648.5,449.0 L648.5,482.6" fill="none" stroke="#00a2b6" stroke-width="1" stroke-linejoin="round"/><rect x="643.5" y="449.5" width="5.0" height="3.0" rx="0" fill="#007078" stroke="#00a2b6" stroke-width="1"/><rect x="643.5" y="479.5" width="5.0" height="3.0" rx="0" fill="#007078" stroke="#00a2b6" stroke-width="1"/>
<rect x="614.5" y="479.5" width="29.0" height="2.0" rx="0" fill="none" stroke="#00a2b6" stroke-width="1"/>
<path d="M614.6,480.4 A29.4,29.4 0 0 1 643.2,450.6" fill="none" stroke="#00a2b6" stroke-width="0.9"/>
<rect x="508.4" y="536.1999999999999" width="33.200000000000045" height="6.000000000000068" fill="#000"/><path d="M508.4,536.5 L541.6,536.5" fill="none" stroke="#00a2b6" stroke-width="1" stroke-linejoin="round"/><path d="M508.4,541.5 L541.6,541.5" fill="none" stroke="#00a2b6" stroke-width="1" stroke-linejoin="round"/><rect x="508.5" y="536.5" width="3.0" height="5.0" rx="0" fill="#007078" stroke="#00a2b6" stroke-width="1"/><rect x="538.5" y="536.5" width="3.0" height="5.0" rx="0" fill="#007078" stroke="#00a2b6" stroke-width="1"/>
<rect x="537.5" y="541.5" width="3.0" height="29.0" rx="0" fill="none" stroke="#00a2b6" stroke-width="1"/>
<path d="M538.8,570.8 A29.4,29.4 0 0 1 509.6,541.6" fill="none" stroke="#00a2b6" stroke-width="0.9"/>
<path d="M478.9,590.4 L478.9,632 M711.7,590.4 L711.7,632" stroke="#007272" stroke-width="1"/>
<path d="M479,628.5 L711.6,628.5" stroke="#007272" stroke-width="1"/>
<path d="M479,628.5 L487,627 L487,630Z M711.6,628.5 L703.6,627 L703.6,630Z" fill="#008a8a"/>
<path d="M713,254.9 L754,254.9 M713,589.5 L754,589.5" stroke="#007272" stroke-width="1"/>
<path d="M750.6,255 L750.6,589.4" stroke="#007272" stroke-width="1"/>
<path d="M750.6,255 L749.1,263 L752.1,263Z M750.6,589.4 L749.1,581.4 L752.1,581.4Z" fill="#008a8a"/>
<g stroke="#a00000" stroke-width="1.1" fill="none"><circle cx="478.7" cy="255" r="5.1"/><path d="M458.5,255 L499,255 M478.7,234 L478.7,275"/></g>
</g></svg>
<div class="t hv2" style="left:627.80px;top:305.51px;font-size:9.2px;letter-spacing:0.062px;color:#ffff00;">Bedroom 3</div>
<div class="t hv2" style="left:640.10px;top:317.61px;font-size:6.6px;letter-spacing:0.148px;color:#8e8e2c">11.5m<span style="font-size:4.09px;position:relative;top:-2.38px">2</span></div>
<div class="t hv2" style="left:507.40px;top:360.21px;font-size:9.2px;letter-spacing:0.096px;color:#ffff00;">Bedroom 2</div>
<div class="t hv2" style="left:519.70px;top:371.41px;font-size:6.6px;letter-spacing:0.184px;color:#8e8e2c">12.3m<span style="font-size:4.09px;position:relative;top:-2.38px">2</span></div>
<div class="t hv2" style="left:501.80px;top:505.91px;font-size:9.2px;letter-spacing:0.007px;color:#ffff00;">Bedroom 1</div>
<div class="t hv2" style="left:514.90px;top:518.31px;font-size:6.6px;letter-spacing:0.270px;color:#8e8e2c">9.2m<span style="font-size:4.09px;position:relative;top:-2.38px">2</span></div>
<div class="t hv2" style="left:489.30px;top:548.61px;font-size:9.2px;letter-spacing:0.091px;color:#ffff00;">Bathroom 1</div>
<div class="t hv2" style="left:493.30px;top:560.21px;font-size:6.6px;letter-spacing:0.210px;color:#8e8e2c">3.3m<span style="font-size:4.09px;position:relative;top:-2.38px">2</span></div>
<div class="t hv2" style="left:652.00px;top:467.21px;font-size:9.2px;letter-spacing:0.091px;color:#ffff00;">Bathroom 2</div>
<div class="t hv2" style="left:667.10px;top:479.21px;font-size:6.6px;letter-spacing:0.270px;color:#8e8e2c">3.3m<span style="font-size:4.09px;position:relative;top:-2.38px">2</span></div>
<div class="t " style="left:588.00px;top:619.20px;font-size:10.4px;letter-spacing:-0.075px;color:#008e8e;">6.4</div>
<div class="t hv2" style="left:618.50px;top:430.30px;font-size:9.2px;letter-spacing:0.119px;color:#ffff00;transform-origin:0 0;transform:rotate(-90deg) translate(0,-7.79px)">Hallway</div>
<div class="t hv2" style="left:628.50px;top:422.60px;font-size:6.6px;letter-spacing:0.130px;color:#8e8e2c;transform-origin:0 0;transform:rotate(-90deg) translate(0,-5.59px)">7.4m<span style="font-size:4.09px;position:relative;top:-2.38px">2</span></div>
<div class="t hv2" style="left:749.60px;top:429.20px;font-size:10.4px;letter-spacing:-0.208px;color:#008e8e;transform-origin:0 0;transform:rotate(-90deg) translate(0,-8.80px)">9.2</div>
<!-- bottom -->
<div class="a" style="left:95px;top:732px;width:1004px;height:16px;background:#fafafa;"></div>
<div class="a" style="left:1099px;top:732px;width:55px;height:16px;background:#ececec;"></div>
<div class="a" style="left:113.5px;top:737px;width:967.5px;height:8px;background:#808080;border-radius:4px"></div>
<div class="a" style="left:1143px;top:302px;width:8.4px;height:281.5px;background:#808080;border-radius:4.2px"></div>
<div class="a" style="left:72px;top:748px;width:1082px;height:2px;background:#c2c2c2;"></div>
<div class="a" style="left:72px;top:750px;width:1081px;height:20px;background:#fff;"></div>
<div class="a" style="left:72px;top:770px;width:1082px;height:1px;background:#c6c6c6;"></div>
<div class="a" style="left:72px;top:771px;width:1082px;height:27px;background:#ececec;"></div>
<div class="a" style="left:71px;top:748px;width:1.6px;height:50px;background:#bcbcbc;"></div>
<div class="a" style="left:138px;top:776px;width:989px;height:18px;background:#fff;"></div>
<div class="a" style="left:1126.6px;top:771.8px;width:24px;height:24.2px;background:linear-gradient(#ededed,#f6f6f6);border:1px solid #bdbdbd;box-sizing:content-box"></div>
<svg width="30" height="30" viewBox="1125 770 30 30" style="left:1125px;top:770px"><rect x="1133.5" y="780.8" width="13" height="9" fill="#f4f4f4" stroke="#444" stroke-width="1"/><rect x="1133" y="780.3" width="14" height="3.2" fill="#000"/></svg>
<div class="t hv" style="left:76.60px;top:751.00px;font-size:13px;letter-spacing:0.065px;color:#0000d0;font-style:italic">Comando:</div>
<div class="t hv" style="left:142.00px;top:751.00px;font-size:13px;letter-spacing:0.050px;color:#0000d0;">new</div>
<div class="t hv" style="left:73.20px;top:778.94px;font-size:13.3px;letter-spacing:-0.117px;color:#111;">Comando:</div>
<div class="t hv" style="left:1119.20px;top:734.30px;font-size:13px;letter-spacing:-0.451px;color:#111;">1 &lt; 10</div>
<div class="a" style="left:0px;top:797px;width:1500px;height:47px;background:#dcdcdc;"></div>
<div class="a" style="left:0px;top:797px;width:1500px;height:1px;background:#d0d0d0;"></div>
<div class="t hv" style="left:2.00px;top:808.23px;font-size:9.3px;letter-spacing:0.508px;color:#1a1a1a;">17.9313,-5.3896</div>
<div class="t hv" style="left:2.00px;top:828.53px;font-size:9.3px;letter-spacing:0.421px;color:#1a1a1a;">@17.9313,-5.3896</div>
<div class="a" style="left:253.5px;top:802px;width:1px;height:40px;background:#5c5c5c;"></div>
<div class="t hv" style="left:256.00px;top:808.23px;font-size:9.3px;letter-spacing:0.478px;color:#1a1a1a;">18.7237&lt;343.27°</div>
<div class="t hv" style="left:256.00px;top:828.53px;font-size:9.3px;letter-spacing:0.424px;color:#1a1a1a;">@18.7237&lt;343.27°</div>
<div class="t hv" style="left:572.00px;top:818.13px;font-size:9.3px;letter-spacing:0.422px;color:#1a1a1a;">Selezionare entità o regione</div>
<div class="t hv" style="left:949.00px;top:818.13px;font-size:9.3px;letter-spacing:0.442px;color:#1a1a1a;">Nessun entità selezionate.</div>
<div class="a" style="left:506.5px;top:819.2px;width:6px;height:6px;background:#cbcbcb;border-radius:50%"></div>
<div class="a" style="left:940.5px;top:819.2px;width:6px;height:6px;background:#cbcbcb;border-radius:50%"></div>
<div class="a" style="left:1269.5px;top:819.2px;width:6px;height:6px;background:#cbcbcb;border-radius:50%"></div>
<svg width="40" height="44" viewBox="706 800 40 44" style="left:706px;top:800px"><rect x="717.4" y="806.2" width="17.4" height="29.3" rx="8.7" fill="#fff" stroke="#4e4e4e" stroke-width="1"/><path d="M717.4,820 Q726.1,817.6 734.8,820" stroke="#444" stroke-width="1.8" fill="none"/><path d="M726.05,806.2 L726.05,808.6 M726.05,815.4 L726.05,818.8" stroke="#444" stroke-width="1.5"/><rect x="724.4" y="808.6" width="3.4" height="6.8" rx="1.6" fill="#fff" stroke="#444" stroke-width="1.2"/></svg>
<!-- layers -->
<div class="a" style="left:1154px;top:108px;width:2px;height:690px;background:#c6c6c6;"></div>
<div class="a" style="left:1156px;top:108px;width:299px;height:22.6px;background:linear-gradient(#ececec,#e4e4e4 55%,#d8d8d8);"></div>
<div class="a" style="left:1156px;top:130.4px;width:299px;height:1px;background:#bdbdbd;"></div>
<div class="a" style="left:1156px;top:156.6px;width:299px;height:641.4px;background:#fff;"></div>
<div class="a" style="left:1155px;top:131px;width:300px;height:25.8px;background:#b2b2b2;"></div>
<div class="a" style="left:1156.0px;top:131.4px;width:58.2px;height:24px;background:linear-gradient(#e9e9e9,#f0f0f0 50%,#f7f7f7);"></div>
<div class="a" style="left:1215.8px;top:131.4px;width:58.2px;height:24px;background:linear-gradient(#e9e9e9,#f0f0f0 50%,#f7f7f7);"></div>
<div class="a" style="left:1275.7px;top:131.4px;width:58.2px;height:24px;background:linear-gradient(#e9e9e9,#f0f0f0 50%,#f7f7f7);"></div>
<div class="a" style="left:1335.5px;top:131.4px;width:58.2px;height:24px;background:linear-gradient(#e9e9e9,#f0f0f0 50%,#f7f7f7);"></div>
<div class="a" style="left:1395.4px;top:131.4px;width:58.2px;height:24px;background:linear-gradient(#e9e9e9,#f0f0f0 50%,#f7f7f7);"></div>
<div class="t hv" style="left:1280.20px;top:114.22px;font-size:11.2px;letter-spacing:0.250px;color:#262626;">Elenco dei livelli</div>
<div class="a" style="left:1156px;top:217px;width:298.4px;height:19.7px;background:#0a48d8;"></div>
<div class="a" style="left:1161px;top:163px;width:14.4px;height:7.4px;background:#000000;border:1px solid #1a1a1a"></div>
<div class="t hv" style="left:1183.20px;top:160.16px;font-size:13.4px;letter-spacing:-0.138px;color:#161616;">0</div>
<div class="a" style="left:1161px;top:183px;width:14.4px;height:7.4px;background:#ffffff;border:1px solid #1a1a1a"></div>
<div class="t hv" style="left:1183.20px;top:180.16px;font-size:13.4px;letter-spacing:0.111px;color:#161616;">Defpoints</div>
<div class="a" style="left:1161px;top:203px;width:14.4px;height:7.4px;background:#008080;border:1px solid #1a1a1a"></div>
<div class="t hv" style="left:1183.20px;top:200.16px;font-size:13.4px;letter-spacing:-0.076px;color:#161616;">Dimensioni</div>
<div class="a" style="left:1161px;top:223px;width:14.4px;height:7.4px;background:#999a46;border:1px solid #1a1a1a"></div>
<div class="t hv" style="left:1183.20px;top:220.16px;font-size:13.4px;letter-spacing:-0.072px;color:#fff;">Dimensioni della stanza</div>
<div class="a" style="left:1161px;top:243px;width:14.4px;height:7.4px;background:#ffff00;border:1px solid #1a1a1a"></div>
<div class="t hv" style="left:1183.20px;top:240.16px;font-size:13.4px;letter-spacing:0.029px;color:#161616;">Etichette</div>
<div class="a" style="left:1161px;top:263px;width:14.4px;height:7.4px;background:#00ffff;border:1px solid #1a1a1a"></div>
<div class="t hv" style="left:1183.20px;top:260.16px;font-size:13.4px;letter-spacing:-0.152px;color:#161616;">Finestre</div>
<div class="a" style="left:1161px;top:283px;width:14.4px;height:7.4px;background:#c0c0c0;border:1px solid #1a1a1a"></div>
<div class="t hv" style="left:1183.20px;top:280.16px;font-size:13.4px;letter-spacing:0.004px;color:#161616;">Interni</div>
<div class="a" style="left:1161px;top:303px;width:14.4px;height:7.4px;background:#a0a0a4;border:1px solid #1a1a1a"></div>
<div class="t hv" style="left:1183.20px;top:300.16px;font-size:13.4px;letter-spacing:-0.051px;color:#161616;">Muri</div>
<div class="a" style="left:1161px;top:323px;width:14.4px;height:7.4px;background:#00ffff;border:1px solid #1a1a1a"></div>
<div class="t hv" style="left:1183.20px;top:320.16px;font-size:13.4px;letter-spacing:-0.134px;color:#161616;">Porte</div>
<div class="a" style="left:1161px;top:343px;width:14.4px;height:7.4px;background:#c0c0c0;border:1px solid #1a1a1a"></div>
<div class="t hv" style="left:1183.20px;top:340.16px;font-size:13.4px;letter-spacing:-0.351px;color:#161616;">Scala</div>
<div class="a" style="left:1161px;top:363px;width:14.4px;height:7.4px;background:#000033;border:1px solid #1a1a1a"></div>
<div class="t hv" style="left:1183.20px;top:360.16px;font-size:13.4px;letter-spacing:-0.182px;color:#161616;">Sfondo</div>
<svg width="1500" height="844" viewBox="0 0 1500 844" style="left:0;top:0">
<defs>
<g id="eye"><path d="M-7.2,0.2 C-5,-4.6 -1.6,-5.6 0.4,-5.6 C3.4,-5.6 6,-3.4 7.4,0 C6,3 3.6,5.4 0.4,5.4 C-2.6,5.4 -5.4,3.4 -7.2,0.2Z" fill="currentColor"/><path d="M-5.2,0.4 C-3.6,2.8 -1.8,3.8 0.4,3.8 C2.6,3.8 4.4,2.6 5.6,0.4 C4.6,-0.6 4,-1.4 3.4,-2 C3.8,1 2.4,2.8 0.2,2.8 C-2,2.8 -3.4,1 -3,-2 C-3.8,-1.4 -4.4,-0.6 -5.2,0.4Z" fill="#fff" fill-opacity="var(--w,1)"/><circle cx="0.2" cy="-0.6" r="2.1" fill="currentColor"/><circle cx="-0.5" cy="-1.3" r="0.7" fill="#fff" fill-opacity="var(--w,1)"/></g>
<g id="lock"><path d="M-3.5,0.6 L-3.5,-2.6 A3.5,3.7 0 0 1 3.5,-2.6 L3.5,0.6" fill="none" stroke="currentColor" stroke-width="1.3"/><rect x="-4.9" y="0.4" width="9.8" height="6.2" fill="currentColor"/></g>
</defs>
<circle cx="1163.9" cy="117.9" r="6.9" fill="#6f6f6f"/><path d="M1160.6,114.6 L1167.2,121.2 M1167.2,114.6 L1160.6,121.2" stroke="#fff" stroke-width="1.7" stroke-linecap="round"/>
<circle cx="1181.9" cy="117.9" r="6.9" fill="#6f6f6f"/><path d="M1180.6,116 L1180.6,114.6 L1185.4,114.6 L1185.4,119 L1184,119" fill="none" stroke="#fff" stroke-width="1.1"/><rect x="1178.4" y="116.8" width="4.8" height="4.2" fill="none" stroke="#fff" stroke-width="1.1"/>
<g transform="translate(1185,143.2)" style="color:#000"><use href="#eye"/></g>
<g transform="translate(1245,143.2)" style="color:#9a9a9a"><use href="#eye"/></g>
<path d="M1299.6,143 L1310.4,143 M1305,137.6 L1305,148.4" stroke="#7a0000" stroke-width="3.6"/><path d="M1300.2,143 L1309.8,143 M1305,138.2 L1305,147.8" stroke="#ff0000" stroke-width="2.4"/>
<rect x="1359.2" y="141.3" width="11.8" height="3.6" fill="#ff0000" stroke="#7a0000" stroke-width="0.7"/>
<path d="M1418.20,149.20 L1422.60,147.46 L1420.30,144.96Z" fill="#d9b98a" stroke="#a8731a" stroke-width="0.4"/><path d="M1418.20,149.20 L1419.52,148.68 L1418.83,147.93Z" fill="#333"/><path d="M1422.60,147.46 L1431.34,139.41 L1429.04,136.91 L1420.30,144.96Z" fill="#e3a533" stroke="#a8731a" stroke-width="0.5"/><path d="M1431.34,139.41 L1433.03,137.85 Q1432.47,136.06 1430.73,135.35 L1429.04,136.91Z" fill="#e8302a" stroke="#a8731a" stroke-width="0.4"/>
<path d="M1395.10,232.70 L1399.22,231.01 L1397.03,228.68Z" fill="#d9b98a" stroke="#8a7450" stroke-width="0.4"/><path d="M1395.10,232.70 L1396.34,232.19 L1395.68,231.49Z" fill="#333"/><path d="M1399.22,231.01 L1406.71,223.95 L1404.51,221.62 L1397.03,228.68Z" fill="#c8a878" stroke="#8a7450" stroke-width="0.5"/><path d="M1406.71,223.95 L1408.38,222.37 Q1407.86,220.66 1406.18,220.04 L1404.51,221.62Z" fill="#e07a8a" stroke="#8a7450" stroke-width="0.4"/>
<g transform="translate(1423.2,166.9)" style="color:#000"><use href="#eye"/></g>
<g transform="translate(1445.1,167.1)" style="color:#b6b6b6"><use href="#lock"/></g>
<g transform="translate(1423.2,186.9)" style="color:#000"><use href="#eye"/></g>
<g transform="translate(1445.1,187.1)" style="color:#b6b6b6"><use href="#lock"/></g>
<g transform="translate(1423.2,206.9)" style="color:#000"><use href="#eye"/></g>
<g transform="translate(1445.1,207.1)" style="color:#b6b6b6"><use href="#lock"/></g>
<g transform="translate(1423.2,226.9)" style="color:#24366e;--w:0"><use href="#eye"/></g><g transform="translate(1423.2,226.9)"><path d="M-5.2,0.4 C-3.6,2.8 -1.8,3.8 0.4,3.8 C2.6,3.8 4.4,2.6 5.6,0.4 C4.6,-0.6 4,-1.4 3.4,-2 C3.8,1 2.4,2.8 0.2,2.8 C-2,2.8 -3.4,1 -3,-2 C-3.8,-1.4 -4.4,-0.6 -5.2,0.4Z" fill="#0a48d8"/></g>
<g transform="translate(1445.1,227.1)" style="color:#a9b7d8"><use href="#lock"/></g>
<g transform="translate(1423.2,246.9)" style="color:#000"><use href="#eye"/></g>
<g transform="translate(1445.1,247.1)" style="color:#b6b6b6"><use href="#lock"/></g>
<g transform="translate(1423.2,266.9)" style="color:#000"><use href="#eye"/></g>
<g transform="translate(1445.1,267.09999999999997)" style="color:#b6b6b6"><use href="#lock"/></g>
<g transform="translate(1423.2,286.9)" style="color:#000"><use href="#eye"/></g>
<g transform="translate(1445.1,287.09999999999997)" style="color:#b6b6b6"><use href="#lock"/></g>
<g transform="translate(1423.2,306.9)" style="color:#000"><use href="#eye"/></g>
<g transform="translate(1445.1,307.09999999999997)" style="color:#b6b6b6"><use href="#lock"/></g>
<g transform="translate(1423.2,326.9)" style="color:#000"><use href="#eye"/></g>
<g transform="translate(1445.1,327.09999999999997)" style="color:#b6b6b6"><use href="#lock"/></g>
<g transform="translate(1423.2,346.9)" style="color:#000"><use href="#eye"/></g>
<g transform="translate(1445.1,347.09999999999997)" style="color:#b6b6b6"><use href="#lock"/></g>
<g transform="translate(1423.2,366.9)" style="color:#000"><use href="#eye"/></g>
<g transform="translate(1445.1,367.09999999999997)" style="color:#ff0000"><use href="#lock"/></g>
</svg>
<!-- righttools -->
<div class="a" style="left:1454.6px;top:108px;width:45.4px;height:690px;background:linear-gradient(90deg,#d8d8d8 0,#ececec 3%,#e9e9e9 30%,#dcdcdc 60%,#c2c2c2 100%);"></div>
<svg width="1500" height="844" viewBox="0 0 1500 844" style="left:0;top:0">
<rect x="1461.80" y="115.6" width="2" height="2" fill="#a2a2a2"/>
<rect x="1467.85" y="115.6" width="2" height="2" fill="#a2a2a2"/>
<rect x="1473.90" y="115.6" width="2" height="2" fill="#a2a2a2"/>
<rect x="1479.95" y="115.6" width="2" height="2" fill="#a2a2a2"/>
<rect x="1486.00" y="115.6" width="2" height="2" fill="#a2a2a2"/>
<rect x="1456.2" y="120.2" width="50" height="42.5" rx="5.5" fill="#b4b4b4"/>
<rect x="1456.2" y="417.2" width="50" height="42.6" rx="5" fill="#b4b4b4"/>
<line x1="1458" y1="261.6" x2="1500" y2="261.6" stroke="#6a6a6a" stroke-width="1" stroke-dasharray="1 2"/>
<line x1="1458" y1="409.6" x2="1500" y2="409.6" stroke="#6a6a6a" stroke-width="1" stroke-dasharray="1 2"/>
<rect x="1463.4" y="127.60000000000001" width="27" height="26.8" fill="#fff" stroke="#333" stroke-width="0.8"/><rect x="1463" y="127.2" width="27.8" height="4.4" fill="#000"/><rect x="1464.2" y="128.1" width="3" height="2.9" fill="#fff"/>
<rect x="1463.4" y="174.6" width="27" height="26.8" fill="#fff" stroke="#333" stroke-width="0.8"/><rect x="1463" y="174.2" width="27.8" height="4.4" fill="#000"/><rect x="1464.2" y="175.1" width="3" height="2.9" fill="#fff"/>
<rect x="1463.4" y="220.6" width="27" height="26.8" fill="#fff" stroke="#333" stroke-width="0.8"/><rect x="1463" y="220.2" width="27.8" height="4.4" fill="#000"/><rect x="1464.2" y="221.1" width="3" height="2.9" fill="#fff"/>
<rect x="1463.4" y="276.4" width="27" height="26.8" fill="#fff" stroke="#333" stroke-width="0.8"/><rect x="1463" y="276" width="27.8" height="4.4" fill="#000"/><rect x="1464.2" y="276.9" width="3" height="2.9" fill="#fff"/>
<rect x="1463.4" y="322.59999999999997" width="27" height="26.8" fill="#fff" stroke="#333" stroke-width="0.8"/><rect x="1463" y="322.2" width="27.8" height="4.4" fill="#000"/><rect x="1464.2" y="323.09999999999997" width="3" height="2.9" fill="#fff"/>
<rect x="1463.4" y="368.59999999999997" width="27" height="26.8" fill="#fff" stroke="#333" stroke-width="0.8"/><rect x="1463" y="368.2" width="27.8" height="4.4" fill="#000"/><rect x="1464.2" y="369.09999999999997" width="3" height="2.9" fill="#fff"/>
<rect x="1463.4" y="424.59999999999997" width="27" height="26.8" fill="#fff" stroke="#333" stroke-width="0.8"/><rect x="1463" y="424.2" width="27.8" height="4.4" fill="#000"/><rect x="1464.2" y="425.09999999999997" width="3" height="2.9" fill="#fff"/>
<rect x="1463.4" y="471.4" width="27" height="26.8" fill="#fff" stroke="#333" stroke-width="0.8"/><rect x="1463" y="471" width="27.8" height="4.4" fill="#000"/><rect x="1464.2" y="471.9" width="3" height="2.9" fill="#fff"/>
<g><path d="M1470,140.6 L1479,137.2 L1479,146.6 L1470,150.0Z" fill="#9a9a9a" stroke="#555" stroke-width="0.6"/><path d="M1472.4,140.0 L1481.4,136.6 L1481.4,146.0 L1472.4,149.4Z" fill="#c8c8c8" stroke="#555" stroke-width="0.6"/><path d="M1474.8,139.4 L1483.8,136.0 L1483.8,145.4 L1474.8,148.8Z" fill="#f4f4f4" stroke="#555" stroke-width="0.6"/><path d="M1477,146.8 L1481,138.6 L1482,144.8 M1478.4,144.0 L1481.8,142.8" stroke="#e33" stroke-width="0.8" fill="none"/></g>
<rect x="1470.4" y="184.6" width="10.4" height="7.6" fill="#eee8c4" stroke="#7a7a6a" stroke-width="0.7"/><circle cx="1479" cy="191.6" r="4.4" fill="#eee8c4" fill-opacity="0.9" stroke="#7a7a6a" stroke-width="0.7"/>
<rect x="1468.4" y="230.6" width="17" height="11" rx="2.4" fill="#f2f2f2" stroke="#b9c9e6" stroke-width="0.9"/>
<rect x="1466.4" y="284.6" width="4.2" height="3.2" fill="#000"/><rect x="1473.6" y="284.6" width="13.8" height="3.2" fill="#fff" stroke="#333" stroke-width="0.6"/>
<rect x="1466.4" y="290.6" width="4.2" height="3.2" fill="#000"/><rect x="1473.6" y="290.6" width="13.8" height="3.2" fill="#fff" stroke="#333" stroke-width="0.6"/>
<rect x="1466.4" y="296.6" width="4.2" height="3.2" fill="#000"/><rect x="1473.6" y="296.6" width="13.8" height="3.2" fill="#fff" stroke="#333" stroke-width="0.6"/>
<path d="M1469.6,331.8 Q1477,329.59999999999997 1484.4,331.8 L1478.6,338.2 L1478.6,344.8 L1475.8,343.2 L1475.8,338.2Z" fill="#9a9a9a" stroke="#5c5c5c" stroke-width="0.7"/><ellipse cx="1477" cy="331.8" rx="7.4" ry="1.7" fill="#777"/>
<path d="M1469.2,377.59999999999997 L1473.6,380.2 L1473.6,388.2 L1469.2,390.8Z" fill="#eee" stroke="#444" stroke-width="0.7"/><rect x="1473.6" y="380.59999999999997" width="10.6" height="7.2" rx="1" fill="#8a8a8a" stroke="#555" stroke-width="0.5"/><rect x="1475" y="380.59999999999997" width="3" height="7.2" fill="#c9c9c9"/><line x1="1467" y1="384.2" x2="1487" y2="384.2" stroke="#f08080" stroke-width="0.7" stroke-dasharray="3 1"/>
<line x1="1465.6" y1="432.8" x2="1478.6" y2="432.8" stroke="#8a8a8a" stroke-width="1" stroke-dasharray="2.4 0.6 1.4 0.5"/>
<line x1="1465.6" y1="436.1" x2="1477.6" y2="436.1" stroke="#8a8a8a" stroke-width="1" stroke-dasharray="2.4 0.6 1.4 0.5"/>
<line x1="1465.6" y1="439.4" x2="1480.6" y2="439.4" stroke="#8a8a8a" stroke-width="1" stroke-dasharray="2.4 0.6 1.4 0.5"/>
<line x1="1465.6" y1="442.7" x2="1480.1999999999998" y2="442.7" stroke="#8a8a8a" stroke-width="1" stroke-dasharray="2.4 0.6 1.4 0.5"/>
<line x1="1463.4" y1="446.59999999999997" x2="1490.4" y2="446.59999999999997" stroke="#333" stroke-width="0.8"/><line x1="1472" y1="449.2" x2="1488" y2="449.2" stroke="#555" stroke-width="1.2" stroke-dasharray="1.6 0.5"/><path d="M1466.4,448.0 l-1.6,1.2 l1.6,1.2" stroke="#444" stroke-width="0.6" fill="none"/>
<rect x="1470.6" y="480.6" width="12.6" height="13.6" rx="1" fill="#c9872a" stroke="#a2661a" stroke-width="0.6"/><path d="M1472.2,482 L1481.6,482 L1481.6,490.6 L1479.4,492.8 L1472.2,492.8Z" fill="#f0f0f0" stroke="#999" stroke-width="0.4"/><path d="M1481.6,490.6 L1479.4,490.6 L1479.4,492.8Z" fill="#999"/><rect x="1474" y="479.4" width="5.8" height="3" rx="0.8" fill="#9b9b8f" stroke="#6e6e64" stroke-width="0.4"/><path d="M1473.6,484.6 h6.6 M1473.6,486.4 h6.6 M1473.6,488.2 h5" stroke="#c4c4c4" stroke-width="0.6"/>
</svg>
<!-- cursor -->
<svg width="1500" height="844" viewBox="0 0 1500 844" style="left:0;top:0">
<defs><radialGradient id="halo" cx="0.5" cy="0.5" r="0.5"><stop offset="0" stop-color="#fff" stop-opacity="0"/><stop offset="0.74" stop-color="#fff" stop-opacity="0"/><stop offset="0.82" stop-color="#f4f7fa" stop-opacity="0.45"/><stop offset="0.875" stop-color="#d3dde7" stop-opacity="0.62"/><stop offset="0.91" stop-color="#b4c4d3" stop-opacity="0.72"/><stop offset="0.985" stop-color="#a6b9cb" stop-opacity="0.78"/><stop offset="1" stop-color="#a6b9cb" stop-opacity="0"/></radialGradient></defs>
<circle cx="1302.8" cy="224.9" r="39.3" fill="url(#halo)"/>
<path d="M1303.4,225.6 L1303.4,246.6 L1308.2,242.4 L1312.4,251.8 L1316,250.2 L1311.8,240.8 L1318,240.2Z" fill="#fff" stroke="#000" stroke-width="1.1" stroke-linejoin="round"/>
</svg>
</div></body></html>
